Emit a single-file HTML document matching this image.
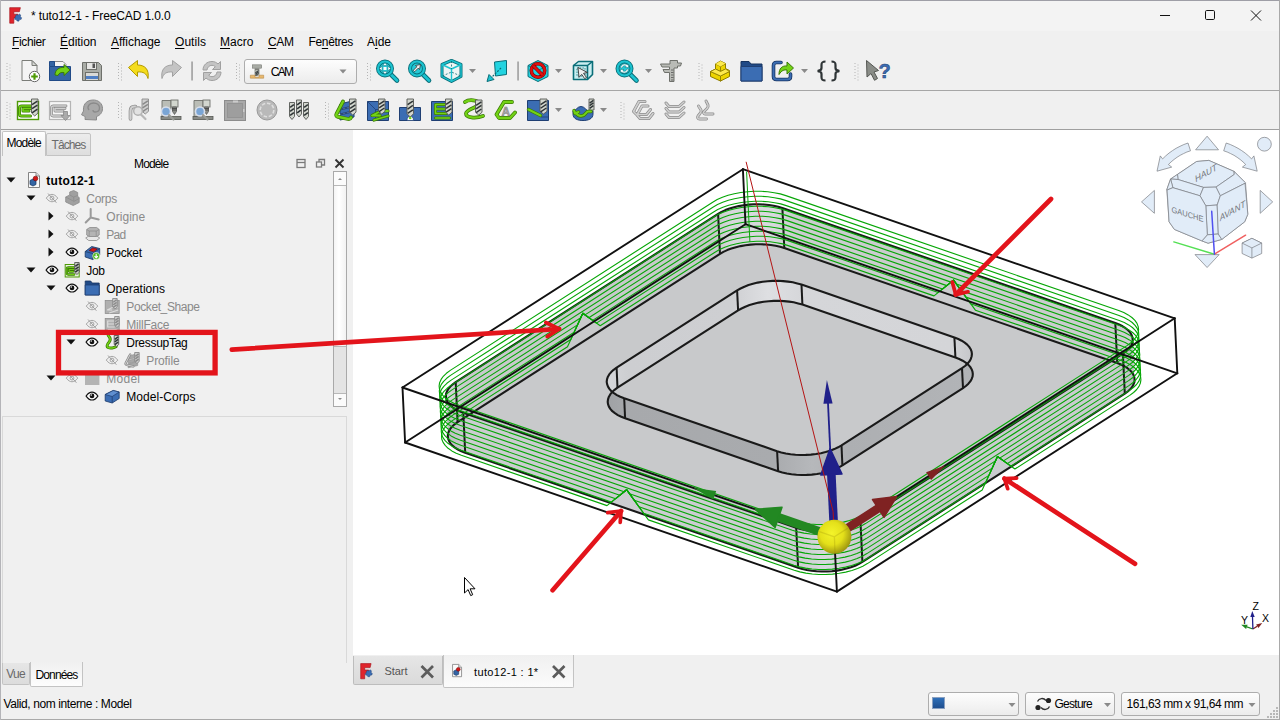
<!DOCTYPE html><html><head><meta charset="utf-8"><title>tuto12-1 - FreeCAD</title><style>
*{box-sizing:border-box;margin:0;padding:0}
html,body{width:1280px;height:720px;overflow:hidden;background:#f0f0f0}
body{font-family:"Liberation Sans",sans-serif;font-size:12px;color:#000;position:relative}
.a{position:absolute}
.t{position:absolute;white-space:nowrap;line-height:16px;height:16px}
.g{color:#8c8c8c}
u{text-decoration-thickness:1px;text-underline-offset:1.5px}
#view{position:absolute;left:353px;top:130px;width:926px;height:525px;background:#fff}
.cb{position:absolute;border:1px solid #adadad;border-radius:3px;background:linear-gradient(#fdfdfd,#ececec)}
.tab{position:absolute;border:1px solid #c3c3c3;border-bottom:none;border-radius:2px 2px 0 0}
</style></head><body><div class="a" style="left:0;top:0;width:1280px;height:31px;background:#f3f3f3"></div>
<div id="t0" class="t " style="left:31px;top:7.5px;letter-spacing:-0.124px;">* tuto12-1 - FreeCAD 1.0.0</div>
<div id="t1" class="t " style="left:12px;top:33.5px;letter-spacing:-0.362px;"><u>F</u>ichier</div>
<div id="t2" class="t " style="left:60px;top:33.5px;letter-spacing:-0.029px;"><u>É</u>dition</div>
<div id="t3" class="t " style="left:111px;top:33.5px;letter-spacing:-0.036px;"><u>A</u>ffichage</div>
<div id="t4" class="t " style="left:175px;top:33.5px;letter-spacing:0.052px;"><u>O</u>utils</div>
<div id="t5" class="t " style="left:220px;top:33.5px;letter-spacing:0.031px;"><u>M</u>acro</div>
<div id="t6" class="t " style="left:268px;top:33.5px;letter-spacing:-0.391px;"><u>C</u>AM</div>
<div id="t7" class="t " style="left:308.5px;top:33.5px;letter-spacing:-0.361px;">Fe<u>n</u>êtres</div>
<div id="t8" class="t " style="left:367px;top:33.5px;letter-spacing:-0.012px;">A<u>i</u>de</div>
<div class="a" style="left:0;top:90px;width:1280px;height:1px;background:#a6a6a6"></div>
<div class="a" style="left:0;top:129px;width:1280px;height:1px;background:#9f9f9f"></div>
<div class="cb" style="left:244px;top:59px;width:113px;height:25px"></div>
<div id="t9" class="t " style="left:270.7px;top:63.5px;letter-spacing:-1.691px;">CAM</div>
<div class="tab" style="left:46px;top:133px;width:45px;height:23px;background:linear-gradient(#ececec,#dedede);border-bottom:1px solid #c3c3c3"></div>
<div class="tab" style="left:2px;top:131px;width:44px;height:25px;background:linear-gradient(#fff,#f0f0f0 70%)"></div>
<div id="t10" class="t " style="left:6.6px;top:135px;letter-spacing:-0.843px;">Modèle</div>
<div id="t11" class="t " style="left:51.6px;top:136.8px;letter-spacing:-0.943px;color:#6a6a6a">Tâches</div>
<div id="t12" class="t " style="left:134px;top:155.5px;letter-spacing:-0.860px;">Modèle</div>
<div id="t13" class="t " style="left:46.3px;top:172.6px;letter-spacing:0.254px;font-weight:bold;">tuto12-1</div>
<div id="t14" class="t " style="left:86.3px;top:190.6px;letter-spacing:-0.263px;color:#8a8a8a;">Corps</div>
<div id="t15" class="t " style="left:106.3px;top:208.6px;letter-spacing:0.045px;color:#8a8a8a;">Origine</div>
<div id="t16" class="t " style="left:106.3px;top:226.6px;letter-spacing:-0.686px;color:#8a8a8a;">Pad</div>
<div id="t17" class="t " style="left:106.3px;top:244.6px;letter-spacing:-0.165px;">Pocket</div>
<div id="t18" class="t " style="left:86.3px;top:262.6px;letter-spacing:-0.320px;">Job</div>
<div id="t19" class="t " style="left:106.3px;top:280.6px;letter-spacing:-0.010px;">Operations</div>
<div id="t20" class="t " style="left:126.3px;top:298.6px;letter-spacing:-0.397px;color:#8a8a8a;">Pocket_Shape</div>
<div id="t21" class="t " style="left:126.3px;top:316.6px;letter-spacing:-0.209px;color:#8a8a8a;">MillFace</div>
<div id="t22" class="t " style="left:126.3px;top:334.6px;letter-spacing:-0.293px;">DressupTag</div>
<div id="t23" class="t " style="left:146.3px;top:352.6px;letter-spacing:-0.117px;color:#8a8a8a;">Profile</div>
<div id="t24" class="t " style="left:106.3px;top:370.6px;letter-spacing:0.263px;color:#8a8a8a;">Model</div>
<div id="t25" class="t " style="left:126.3px;top:388.6px;letter-spacing:0.054px;">Model-Corps</div>
<div class="a" style="left:333px;top:171px;width:14px;height:236px;background:#e4e4e4;border:1px solid #a9a9a9"></div>
<div class="a" style="left:334px;top:185px;width:12px;height:162px;background:linear-gradient(90deg,#f4f4f4,#fff 40%,#f2f2f2);border-top:1px solid #b8b8b8;border-bottom:1px solid #b8b8b8"></div>
<div class="a" style="left:334px;top:172px;width:12px;height:13px;background:#fbfbfb"></div>
<div class="a" style="left:334px;top:393px;width:12px;height:13px;background:#fbfbfb;border-top:1px solid #b8b8b8"></div>
<div class="a" style="left:2px;top:416px;width:345px;height:247px;border:1px solid #d9d9d9;border-bottom:none;background:#f0f0f0"></div>
<div class="tab" style="left:2px;top:663px;width:28px;height:22px;border:1px solid #c3c3c3;border-top:none;border-radius:0 0 2px 2px;background:linear-gradient(#e6e6e6,#dcdcdc)"></div>
<div class="tab" style="left:30px;top:662px;width:53px;height:25px;border:1px solid #c3c3c3;border-top:none;border-radius:0 0 2px 2px;background:linear-gradient(#f0f0f0,#fdfdfd)"></div>
<div id="t26" class="t " style="left:6.3px;top:665.5px;letter-spacing:-0.802px;color:#6a6a6a">Vue</div>
<div id="t27" class="t " style="left:35.5px;top:667px;letter-spacing:-0.864px;">Données</div>
<div id="t28" class="t " style="left:3.5px;top:696px;letter-spacing:-0.404px;">Valid, nom interne : Model</div>
<div id="view"></div>
<div class="tab" style="left:353px;top:656px;width:90px;height:29px;border:1px solid #bdbdbd;border-top:none;border-radius:0 0 2px 2px;background:linear-gradient(#e6e6e6,#dadada)"></div>
<div class="tab" style="left:443px;top:655px;width:131px;height:33px;border:1px solid #c3c3c3;border-top:none;border-radius:0 0 2px 2px;background:linear-gradient(#f0f0f0,#fbfbfb)"></div>
<div id="t29" class="t " style="left:384.5px;top:662.5px;letter-spacing:-0.047px;color:#555;font-size:11px">Start</div>
<div id="t30" class="t " style="left:474px;top:663.5px;letter-spacing:0.351px;font-size:11px">tuto12-1 : 1*</div>
<div class="cb" style="left:928px;top:692px;width:91px;height:24px"></div>
<div class="a" style="left:932px;top:697px;width:13px;height:12px;background:linear-gradient(#2f6fb8,#1f4f8f);border:1px solid #8aa0c0"></div>
<div class="cb" style="left:1025px;top:692px;width:90px;height:24px"></div>
<div id="t31" class="t " style="left:1054.5px;top:696px;letter-spacing:-0.741px;">Gesture</div>
<div class="cb" style="left:1121px;top:692px;width:139px;height:24px"></div>
<div id="t32" class="t " style="left:1126.5px;top:696px;letter-spacing:-0.478px;">161,63 mm x 91,64 mm</div>
<svg class="a" style="left:0;top:0" width="1280" height="720" viewBox="0 0 1280 720"><defs><clipPath id="vclip"><rect x="353" y="130" width="926" height="525"/></clipPath></defs><g clip-path="url(#vclip)">
<defs><linearGradient id="gw" x1="0" x2="1"><stop offset="0" stop-color="#bfc0c4"/><stop offset=".5" stop-color="#d9dade"/><stop offset="1" stop-color="#c4c5c9"/></linearGradient><clipPath id="cpk"><polygon points="801.5,284.6 797.3,283.4 792.8,282.3 788,281.6 783.1,281.1 778,280.8 772.9,280.9 767.7,281.2 762.7,281.8 757.7,282.6 753,283.8 748.5,285.1 744.4,286.7 740.5,288.5 737.1,290.4 616.6,367.7 613.6,369.8 611.2,372.1 609.2,374.4 607.8,376.9 607,379.3 606.7,381.8 607.1,384.2 608,386.6 609.4,388.9 611.4,391.2 613.9,393.2 616.9,395.1 620.3,396.8 624.2,398.3 777.1,451.2 781.3,452.4 785.8,453.5 790.6,454.2 795.5,454.7 800.6,455 805.8,454.9 810.9,454.6 815.9,454 820.9,453.2 825.6,452 830.1,450.7 834.3,449.1 838.1,447.3 841.5,445.4 962,368.1 965,366 967.4,363.7 969.4,361.4 970.8,358.9 971.6,356.5 971.9,354 971.6,351.6 970.7,349.2 969.2,346.9 967.2,344.6 964.7,342.6 961.7,340.7 958.3,339 954.4,337.5"/></clipPath></defs>
<polygon points="445.9,396.2 446.1,393.7 447,391.3 448.4,388.9 450.3,386.5 452.8,384.3 455.7,382.1 718.1,213.9 721.5,211.9 725.3,210.1 729.5,208.6 734,207.2 738.7,206.1 743.6,205.2 748.7,204.6 753.8,204.3 759,204.3 764,204.5 769,205 773.7,205.8 778.2,206.8 782.4,208.1 1115.3,323 1119.1,324.5 1122.6,326.3 1125.6,328.2 1128.1,330.2 1130.1,332.4 1131.5,334.8 1132.4,337.2 1132.7,339.6 1134.6,379.6 1134.4,382.1 1133.5,384.5 1132.2,386.9 1130.2,389.3 1127.8,391.5 1124.8,393.7 862.4,561.9 859,563.9 855.2,565.7 851,567.2 846.5,568.6 841.8,569.7 836.9,570.6 831.8,571.2 826.7,571.5 821.6,571.5 816.5,571.3 811.5,570.8 806.8,570 802.3,569 798.1,567.7 465.2,452.8 461.4,451.3 457.9,449.5 454.9,447.6 452.4,445.6 450.4,443.4 449,441 448.1,438.6 447.8,436.2" fill="url(#gwl)"/>
<clipPath id="cpt"><polygon points="782.4,208.1 778.2,206.8 773.7,205.8 769,205 764,204.5 759,204.3 753.8,204.3 748.7,204.6 743.6,205.2 738.7,206.1 734,207.2 729.5,208.6 725.3,210.1 721.5,211.9 718.1,213.9 455.7,382.1 452.8,384.3 450.3,386.5 448.4,388.9 447,391.3 446.1,393.7 445.9,396.2 446.2,398.6 447.1,401 448.5,403.4 450.5,405.6 453,407.6 456,409.5 459.5,411.3 463.3,412.8 796.2,527.7 800.4,529 804.9,530 809.6,530.8 814.6,531.3 819.7,531.5 824.8,531.5 829.9,531.2 835,530.6 839.9,529.7 844.6,528.6 849.1,527.2 853.3,525.7 857.1,523.9 860.5,521.9 1122.9,353.7 1125.9,351.5 1128.3,349.3 1130.3,346.9 1131.7,344.5 1132.5,342.1 1132.7,339.6 1132.4,337.2 1131.5,334.8 1130.1,332.4 1128.1,330.2 1125.6,328.2 1122.6,326.3 1119.1,324.5 1115.3,323"/></clipPath>
<defs><linearGradient id="gbk" gradientUnits="userSpaceOnUse" x1="446" x2="1142" y1="0" y2="0"><stop offset="0" stop-color="#d4d5d9"/><stop offset=".03" stop-color="#c8c9cb"/><stop offset=".385" stop-color="#c8c9cb"/><stop offset=".41" stop-color="#d6d7db"/><stop offset=".47" stop-color="#d8d9dd"/><stop offset=".5" stop-color="#cbccce"/><stop offset=".96" stop-color="#cbccce"/><stop offset="1" stop-color="#d2d3d7"/></linearGradient></defs>
<polygon points="782.4,208.1 778.2,206.8 773.7,205.8 769,205 764,204.5 759,204.3 753.8,204.3 748.7,204.6 743.6,205.2 738.7,206.1 734,207.2 729.5,208.6 725.3,210.1 721.5,211.9 718.1,213.9 455.7,382.1 452.8,384.3 450.3,386.5 448.4,388.9 447,391.3 446.1,393.7 445.9,396.2 446.2,398.6 447.1,401 448.5,403.4 450.5,405.6 453,407.6 456,409.5 459.5,411.3 463.3,412.8 796.2,527.7 800.4,529 804.9,530 809.6,530.8 814.6,531.3 819.7,531.5 824.8,531.5 829.9,531.2 835,530.6 839.9,529.7 844.6,528.6 849.1,527.2 853.3,525.7 857.1,523.9 860.5,521.9 1122.9,353.7 1125.9,351.5 1128.3,349.3 1130.3,346.9 1131.7,344.5 1132.5,342.1 1132.7,339.6 1132.4,337.2 1131.5,334.8 1130.1,332.4 1128.1,330.2 1125.6,328.2 1122.6,326.3 1119.1,324.5 1115.3,323" fill="url(#gbk)"/>
<polygon points="784.3,248.1 780.1,246.8 775.6,245.8 770.9,245 765.9,244.5 760.8,244.3 755.7,244.3 750.6,244.6 745.5,245.2 740.6,246.1 735.9,247.2 731.4,248.6 727.2,250.1 723.4,251.9 720,253.9 457.6,422.1 454.6,424.3 452.2,426.5 450.2,428.9 448.9,431.3 448,433.7 447.8,436.2 448.1,438.6 449,441 450.4,443.4 452.4,445.6 454.9,447.6 457.9,449.5 461.4,451.3 465.2,452.8 798.1,567.7 802.3,569 806.8,570 811.5,570.8 816.5,571.3 821.6,571.5 826.7,571.5 831.8,571.2 836.9,570.6 841.8,569.7 846.5,568.6 851,567.2 855.2,565.7 859,563.9 862.4,561.9 1124.8,393.7 1127.8,391.5 1130.2,389.3 1132.2,386.9 1133.5,384.5 1134.4,382.1 1134.6,379.6 1134.3,377.2 1133.4,374.8 1132,372.4 1130,370.2 1127.5,368.2 1124.5,366.3 1121,364.5 1117.2,363" fill="#c8c9cb" clip-path="url(#cpt)"/>
<defs><linearGradient id="gd" gradientUnits="userSpaceOnUse" x1="606" x2="974" y1="0" y2="0"><stop offset="0" stop-color="#9fa1a4"/><stop offset=".06" stop-color="#a7a9ac"/><stop offset=".46" stop-color="#a9abae"/><stop offset=".56" stop-color="#b6b8bb"/><stop offset=".66" stop-color="#adafb2"/><stop offset="1" stop-color="#b2b4b7"/></linearGradient><linearGradient id="gl" gradientUnits="userSpaceOnUse" x1="606" x2="974" y1="0" y2="0"><stop offset="0" stop-color="#d6d7da"/><stop offset=".06" stop-color="#cdced1"/><stop offset=".34" stop-color="#cecfd2"/><stop offset=".44" stop-color="#dedfe2"/><stop offset=".54" stop-color="#d5d6d9"/><stop offset=".94" stop-color="#d4d5d8"/><stop offset="1" stop-color="#c4c5c8"/></linearGradient><linearGradient id="gwl" gradientUnits="userSpaceOnUse" x1="446" x2="1142" y1="0" y2="0"><stop offset="0" stop-color="#bbbcc0"/><stop offset=".03" stop-color="#cbccd0"/><stop offset=".5" stop-color="#cccdd1"/><stop offset=".55" stop-color="#d8d9dd"/><stop offset=".6" stop-color="#cbccd0"/><stop offset=".96" stop-color="#cacbcf"/><stop offset="1" stop-color="#babbbf"/></linearGradient></defs>
<polygon points="802.4,304.6 798.2,303.4 793.7,302.3 789,301.6 784,301.1 778.9,300.8 773.8,300.9 768.7,301.2 763.6,301.8 758.7,302.6 754,303.8 749.5,305.1 745.3,306.7 741.5,308.5 738.1,310.4 617.5,387.7 614.6,389.8 612.1,392.1 610.2,394.4 608.8,396.9 608,399.3 607.7,401.8 608,404.2 608.9,406.6 610.3,408.9 612.3,411.2 614.9,413.2 617.8,415.1 621.3,416.8 625.1,418.3 778.1,471.2 782.3,472.4 786.8,473.5 791.5,474.2 796.5,474.7 801.6,475 806.7,474.9 811.8,474.6 816.9,474 821.8,473.2 826.6,472 831,470.7 835.2,469.1 839,467.3 842.4,465.4 963,388.1 965.9,386 968.4,383.7 970.3,381.4 971.7,378.9 972.6,376.5 972.8,374 972.5,371.6 971.6,369.2 970.2,366.9 968.2,364.6 965.7,362.6 962.7,360.7 959.2,359 955.4,357.5" fill="url(#gd)"/>
<polygon points="801.5,284.6 797.3,283.4 792.8,282.3 788,281.6 783.1,281.1 778,280.8 772.9,280.9 767.7,281.2 762.7,281.8 757.7,282.6 753,283.8 748.5,285.1 744.4,286.7 740.5,288.5 737.1,290.4 616.6,367.7 613.6,369.8 611.2,372.1 609.2,374.4 607.8,376.9 607,379.3 606.7,381.8 607.1,384.2 608,386.6 609.4,388.9 611.4,391.2 613.9,393.2 616.9,395.1 620.3,396.8 624.2,398.3 777.1,451.2 781.3,452.4 785.8,453.5 790.6,454.2 795.5,454.7 800.6,455 805.8,454.9 810.9,454.6 815.9,454 820.9,453.2 825.6,452 830.1,450.7 834.3,449.1 838.1,447.3 841.5,445.4 962,368.1 965,366 967.4,363.7 969.4,361.4 970.8,358.9 971.6,356.5 971.9,354 971.6,351.6 970.7,349.2 969.2,346.9 967.2,344.6 964.7,342.6 961.7,340.7 958.3,339 954.4,337.5" fill="url(#gl)"/>
<polygon points="802.4,304.6 798.2,303.4 793.7,302.3 789,301.6 784,301.1 778.9,300.8 773.8,300.9 768.7,301.2 763.6,301.8 758.7,302.6 754,303.8 749.5,305.1 745.3,306.7 741.5,308.5 738.1,310.4 617.5,387.7 614.6,389.8 612.1,392.1 610.2,394.4 608.8,396.9 608,399.3 607.7,401.8 608,404.2 608.9,406.6 610.3,408.9 612.3,411.2 614.9,413.2 617.8,415.1 621.3,416.8 625.1,418.3 778.1,471.2 782.3,472.4 786.8,473.5 791.5,474.2 796.5,474.7 801.6,475 806.7,474.9 811.8,474.6 816.9,474 821.8,473.2 826.6,472 831,470.7 835.2,469.1 839,467.3 842.4,465.4 963,388.1 965.9,386 968.4,383.7 970.3,381.4 971.7,378.9 972.6,376.5 972.8,374 972.5,371.6 971.6,369.2 970.2,366.9 968.2,364.6 965.7,362.6 962.7,360.7 959.2,359 955.4,357.5" fill="#c8c9cb" clip-path="url(#cpk)"/>
<polygon points="784.3,248.1 780.1,246.8 775.6,245.8 770.9,245 765.9,244.5 760.8,244.3 755.7,244.3 750.6,244.6 745.5,245.2 740.6,246.1 735.9,247.2 731.4,248.6 727.2,250.1 723.4,251.9 720,253.9 457.6,422.1 454.6,424.3 452.2,426.5 450.2,428.9 448.9,431.3 448,433.7 447.8,436.2 448.1,438.6 449,441 450.4,443.4 452.4,445.6 454.9,447.6 457.9,449.5 461.4,451.3 465.2,452.8 798.1,567.7 802.3,569 806.8,570 811.5,570.8 816.5,571.3 821.6,571.5 826.7,571.5 831.8,571.2 836.9,570.6 841.8,569.7 846.5,568.6 851,567.2 855.2,565.7 859,563.9 862.4,561.9 1124.8,393.7 1127.8,391.5 1130.2,389.3 1132.2,386.9 1133.5,384.5 1134.4,382.1 1134.6,379.6 1134.3,377.2 1133.4,374.8 1132,372.4 1130,370.2 1127.5,368.2 1124.5,366.3 1121,364.5 1117.2,363" fill="none" stroke="#1a1a1a" stroke-width="2.1" stroke-linejoin="round"/>
<polygon points="782.4,208.1 778.2,206.8 773.7,205.8 769,205 764,204.5 759,204.3 753.8,204.3 748.7,204.6 743.6,205.2 738.7,206.1 734,207.2 729.5,208.6 725.3,210.1 721.5,211.9 718.1,213.9 455.7,382.1 452.8,384.3 450.3,386.5 448.4,388.9 447,391.3 446.1,393.7 445.9,396.2 446.2,398.6 447.1,401 448.5,403.4 450.5,405.6 453,407.6 456,409.5 459.5,411.3 463.3,412.8 796.2,527.7 800.4,529 804.9,530 809.6,530.8 814.6,531.3 819.7,531.5 824.8,531.5 829.9,531.2 835,530.6 839.9,529.7 844.6,528.6 849.1,527.2 853.3,525.7 857.1,523.9 860.5,521.9 1122.9,353.7 1125.9,351.5 1128.3,349.3 1130.3,346.9 1131.7,344.5 1132.5,342.1 1132.7,339.6 1132.4,337.2 1131.5,334.8 1130.1,332.4 1128.1,330.2 1125.6,328.2 1122.6,326.3 1119.1,324.5 1115.3,323" fill="none" stroke="#1a1a1a" stroke-width="2.1" stroke-linejoin="round"/>
<polygon points="802.4,304.6 798.2,303.4 793.7,302.3 789,301.6 784,301.1 778.9,300.8 773.8,300.9 768.7,301.2 763.6,301.8 758.7,302.6 754,303.8 749.5,305.1 745.3,306.7 741.5,308.5 738.1,310.4 617.5,387.7 614.6,389.8 612.1,392.1 610.2,394.4 608.8,396.9 608,399.3 607.7,401.8 608,404.2 608.9,406.6 610.3,408.9 612.3,411.2 614.9,413.2 617.8,415.1 621.3,416.8 625.1,418.3 778.1,471.2 782.3,472.4 786.8,473.5 791.5,474.2 796.5,474.7 801.6,475 806.7,474.9 811.8,474.6 816.9,474 821.8,473.2 826.6,472 831,470.7 835.2,469.1 839,467.3 842.4,465.4 963,388.1 965.9,386 968.4,383.7 970.3,381.4 971.7,378.9 972.6,376.5 972.8,374 972.5,371.6 971.6,369.2 970.2,366.9 968.2,364.6 965.7,362.6 962.7,360.7 959.2,359 955.4,357.5" fill="none" stroke="#1a1a1a" stroke-width="2.1" stroke-linejoin="round"/>
<polygon points="801.5,284.6 797.3,283.4 792.8,282.3 788,281.6 783.1,281.1 778,280.8 772.9,280.9 767.7,281.2 762.7,281.8 757.7,282.6 753,283.8 748.5,285.1 744.4,286.7 740.5,288.5 737.1,290.4 616.6,367.7 613.6,369.8 611.2,372.1 609.2,374.4 607.8,376.9 607,379.3 606.7,381.8 607.1,384.2 608,386.6 609.4,388.9 611.4,391.2 613.9,393.2 616.9,395.1 620.3,396.8 624.2,398.3 777.1,451.2 781.3,452.4 785.8,453.5 790.6,454.2 795.5,454.7 800.6,455 805.8,454.9 810.9,454.6 815.9,454 820.9,453.2 825.6,452 830.1,450.7 834.3,449.1 838.1,447.3 841.5,445.4 962,368.1 965,366 967.4,363.7 969.4,361.4 970.8,358.9 971.6,356.5 971.9,354 971.6,351.6 970.7,349.2 969.2,346.9 967.2,344.6 964.7,342.6 961.7,340.7 958.3,339 954.4,337.5" fill="none" stroke="#1a1a1a" stroke-width="2.1" stroke-linejoin="round"/>
<line x1="860.5" y1="521.9" x2="862.4" y2="561.9" stroke="#1a1a1a" stroke-width="2"/>
<line x1="796.2" y1="527.7" x2="798.1" y2="567.7" stroke="#1a1a1a" stroke-width="2"/>
<line x1="1122.9" y1="353.7" x2="1124.8" y2="393.7" stroke="#1a1a1a" stroke-width="2"/>
<line x1="1115.3" y1="323" x2="1117.2" y2="363" stroke="#1a1a1a" stroke-width="2"/>
<line x1="463.3" y1="412.8" x2="465.2" y2="452.8" stroke="#1a1a1a" stroke-width="2"/>
<line x1="455.7" y1="382.1" x2="457.6" y2="422.1" stroke="#1a1a1a" stroke-width="2"/>
<line x1="718.1" y1="213.9" x2="720" y2="253.9" stroke="#1a1a1a" stroke-width="2"/>
<line x1="782.4" y1="208.1" x2="784.3" y2="248.1" stroke="#1a1a1a" stroke-width="2"/>
<line x1="841.5" y1="445.4" x2="842.4" y2="465.4" stroke="#1a1a1a" stroke-width="2"/>
<line x1="777.1" y1="451.2" x2="778.1" y2="471.2" stroke="#1a1a1a" stroke-width="2"/>
<line x1="962" y1="368.1" x2="963" y2="388.1" stroke="#1a1a1a" stroke-width="2"/>
<line x1="954.4" y1="337.5" x2="955.4" y2="357.5" stroke="#1a1a1a" stroke-width="2"/>
<line x1="624.2" y1="398.3" x2="625.1" y2="418.3" stroke="#1a1a1a" stroke-width="2"/>
<line x1="616.6" y1="367.7" x2="617.5" y2="387.7" stroke="#1a1a1a" stroke-width="2"/>
<line x1="737.1" y1="290.4" x2="738.1" y2="310.4" stroke="#1a1a1a" stroke-width="2"/>
<line x1="801.5" y1="284.6" x2="802.4" y2="304.6" stroke="#1a1a1a" stroke-width="2"/>
<polygon points="785.9,195.6 780.3,193.9 774.2,192.7 767.8,191.8 761.1,191.3 754.3,191.3 747.5,191.7 740.8,192.5 734.3,193.7 728.1,195.3 722.4,197.3 717.2,199.6 712.7,202.2 450.3,370.4 446.4,373.3 443.3,376.3 441.1,379.4 439.6,382.7 439.1,386 439.5,389.2 440.7,392.4 442.8,395.4 445.7,398.3 449.5,400.9 453.9,403.2 459,405.3 791.8,520.2 797.4,521.9 803.5,523.1 809.9,524 816.6,524.5 823.4,524.5 830.2,524.1 836.9,523.3 843.4,522.1 849.5,520.5 855.2,518.5 860.4,516.2 865,513.6 1127.4,345.4 1131.2,342.5 1134.3,339.5 1136.6,336.4 1138,333.1 1138.6,329.8 1138.2,326.6 1137,323.4 1134.9,320.4 1131.9,317.5 1128.2,314.9 1123.8,312.6 1118.7,310.5" fill="none" stroke="#06a606" stroke-width="1.12" stroke-linejoin="round"/>
<polygon points="786.1,200.6 780.5,198.9 774.4,197.7 768,196.8 761.3,196.3 754.5,196.3 747.7,196.7 741,197.5 734.5,198.7 728.4,200.3 722.7,202.3 717.5,204.6 712.9,207.2 450.5,375.4 446.7,378.3 443.6,381.3 441.3,384.4 439.9,387.7 439.3,391 439.7,394.2 440.9,397.4 443,400.4 446,403.3 449.7,405.9 454.1,408.2 459.2,410.3 792,525.2 797.7,526.9 803.7,528.1 810.2,529 816.8,529.5 823.6,529.5 830.4,529.1 837.1,528.3 843.6,527.1 849.8,525.5 855.5,523.5 860.7,521.2 865.2,518.6 1127.6,350.4 1131.5,347.5 1134.6,344.5 1136.9,341.4 1138.3,338.1 1138.8,334.8 1138.5,331.6 1137.2,328.4 1135.1,325.4 1132.2,322.5 1128.5,319.9 1124,317.6 1119,315.5" fill="none" stroke="#06a606" stroke-width="1.12" stroke-linejoin="round"/>
<polygon points="786.3,205.6 780.7,203.9 774.7,202.7 768.2,201.8 761.6,201.3 754.8,201.3 748,201.7 741.3,202.5 734.8,203.7 728.6,205.3 722.9,207.3 717.7,209.6 713.2,212.2 450.8,380.4 446.9,383.3 443.8,386.3 441.5,389.4 440.1,392.7 439.6,396 439.9,399.2 441.2,402.4 443.3,405.4 446.2,408.3 449.9,410.9 454.4,413.2 459.4,415.3 792.3,530.2 797.9,531.9 804,533.1 810.4,534 817.1,534.5 823.9,534.5 830.7,534.1 837.4,533.3 843.8,532.1 850,530.5 855.7,528.5 860.9,526.2 865.5,523.6 1127.9,355.4 1131.7,352.5 1134.8,349.5 1137.1,346.4 1138.5,343.1 1139,339.8 1138.7,336.6 1137.4,333.4 1135.3,330.4 1132.4,327.5 1128.7,324.9 1124.3,322.6 1119.2,320.5" fill="none" stroke="#06a606" stroke-width="1.12" stroke-linejoin="round"/>
<polygon points="786.6,210.6 781,208.9 774.9,207.7 768.5,206.8 761.8,206.3 755,206.3 748.2,206.7 741.5,207.5 735,208.7 728.9,210.3 723.1,212.3 717.9,214.6 713.4,217.2 451,385.4 447.1,388.3 444,391.3 441.8,394.4 440.3,397.7 439.8,401 440.2,404.2 441.4,407.4 443.5,410.4 446.5,413.3 450.2,415.9 454.6,418.2 459.7,420.3 792.5,535.2 798.1,536.9 804.2,538.1 810.6,539 817.3,539.5 824.1,539.5 830.9,539.1 837.6,538.3 844.1,537.1 850.2,535.5 856,533.5 861.1,531.2 865.7,528.6 1128.1,360.4 1132,357.5 1135.1,354.5 1137.3,351.4 1138.7,348.1 1139.3,344.8 1138.9,341.6 1137.7,338.4 1135.6,335.4 1132.6,332.5 1128.9,329.9 1124.5,327.6 1119.4,325.5" fill="none" stroke="#06a606" stroke-width="1.12" stroke-linejoin="round"/>
<polygon points="786.8,215.6 781.2,213.9 775.1,212.7 768.7,211.8 762,211.3 755.2,211.3 748.4,211.7 741.7,212.5 735.2,213.7 729.1,215.3 723.4,217.3 718.2,219.6 713.6,222.2 451.2,390.4 447.4,393.3 444.3,396.3 442,399.4 440.6,402.7 440,406 440.4,409.2 441.6,412.4 443.8,415.4 446.7,418.3 450.4,420.9 454.8,423.2 459.9,425.3 792.7,540.2 798.4,541.9 804.4,543.1 810.9,544 817.5,544.5 824.3,544.5 831.1,544.1 837.8,543.3 844.3,542.1 850.5,540.5 856.2,538.5 861.4,536.2 865.9,533.6 1128.3,365.4 1132.2,362.5 1135.3,359.5 1137.6,356.4 1139,353.1 1139.5,349.8 1139.2,346.6 1137.9,343.4 1135.8,340.4 1132.9,337.5 1129.2,334.9 1124.7,332.6 1119.7,330.5" fill="none" stroke="#06a606" stroke-width="1.12" stroke-linejoin="round"/>
<polygon points="787.1,220.6 781.4,218.9 775.4,217.7 768.9,216.8 762.3,216.3 755.5,216.3 748.7,216.7 742,217.5 735.5,218.7 729.3,220.3 723.6,222.3 718.4,224.6 713.9,227.2 451.5,395.4 447.6,398.3 444.5,401.3 442.2,404.4 440.8,407.7 440.3,411 440.6,414.2 441.9,417.4 444,420.4 446.9,423.3 450.6,425.9 455.1,428.2 460.1,430.3 793,545.2 798.6,546.9 804.7,548.1 811.1,549 817.8,549.5 824.6,549.5 831.4,549.1 838.1,548.3 844.6,547.1 850.7,545.5 856.4,543.5 861.6,541.2 866.2,538.6 1128.6,370.4 1132.4,367.5 1135.5,364.5 1137.8,361.4 1139.2,358.1 1139.8,354.8 1139.4,351.6 1138.2,348.4 1136,345.4 1133.1,342.5 1129.4,339.9 1125,337.6 1119.9,335.5" fill="none" stroke="#06a606" stroke-width="1.12" stroke-linejoin="round"/>
<polygon points="787.3,225.6 781.7,223.9 775.6,222.7 769.2,221.8 762.5,221.3 755.7,221.3 748.9,221.7 742.2,222.5 735.7,223.7 729.6,225.3 723.8,227.3 718.7,229.6 714.1,232.2 585,314.9 582.8,313.3 580.8,317.7 451.7,400.4 447.8,403.3 444.7,406.3 442.5,409.4 441.1,412.7 440.5,416 440.9,419.2 442.1,422.4 444.2,425.4 447.2,428.3 450.9,430.9 455.3,433.2 460.4,435.3 624.1,491.8 626.6,489.7 629.5,493.7 793.2,550.2 798.8,551.9 804.9,553.1 811.3,554 818,554.5 824.8,554.5 831.6,554.1 838.3,553.3 844.8,552.1 850.9,550.5 856.7,548.5 861.9,546.2 866.4,543.6 995.5,460.9 997.5,456.5 999.7,458.1 1128.8,375.4 1132.7,372.5 1135.8,369.5 1138,366.4 1139.5,363.1 1140,359.8 1139.6,356.6 1138.4,353.4 1136.3,350.4 1133.3,347.5 1129.6,344.9 1125.2,342.6 1120.1,340.5 956.4,284 953.6,280.1 951,282.1" fill="none" stroke="#06a606" stroke-width="1.12" stroke-linejoin="round"/>
<polygon points="787.5,230.6 781.9,228.9 775.8,227.7 769.4,226.8 762.7,226.3 755.9,226.3 749.1,226.7 742.4,227.5 736,228.7 729.8,230.3 724.1,232.3 718.9,234.6 714.3,237.2 588.8,317.7 582.8,313.3 577.5,324.9 451.9,405.4 448.1,408.3 445,411.3 442.7,414.4 441.3,417.7 440.8,421 441.1,424.2 442.4,427.4 444.5,430.4 447.4,433.3 451.1,435.9 455.5,438.2 460.6,440.3 619.8,495.2 626.6,489.7 634.2,500.2 793.5,555.2 799.1,556.9 805.1,558.1 811.6,559 818.2,559.5 825,559.5 831.8,559.1 838.5,558.3 845,557.1 851.2,555.5 856.9,553.5 862.1,551.2 866.6,548.6 992.2,468.1 997.5,456.5 1003.5,460.9 1129,380.4 1132.9,377.5 1136,374.5 1138.3,371.4 1139.7,368.1 1140.2,364.8 1139.9,361.6 1138.6,358.4 1136.5,355.4 1133.6,352.5 1129.9,349.9 1125.4,347.6 1120.4,345.5 961.2,290.6 953.6,280.1 946.8,285.6" fill="none" stroke="#06a606" stroke-width="1.12" stroke-linejoin="round"/>
<polygon points="787.8,235.6 782.1,233.9 776.1,232.7 769.6,231.8 763,231.3 756.2,231.3 749.4,231.7 742.7,232.5 736.2,233.7 730,235.3 724.3,237.3 719.1,239.6 714.6,242.2 592.6,320.4 582.8,313.3 574.2,332.2 452.2,410.4 448.3,413.3 445.2,416.3 442.9,419.4 441.5,422.7 441,426 441.3,429.2 442.6,432.4 444.7,435.4 447.6,438.3 451.3,440.9 455.8,443.2 460.8,445.3 615.6,498.7 626.6,489.7 639,506.8 793.7,560.2 799.3,561.9 805.4,563.1 811.8,564 818.5,564.5 825.3,564.5 832.1,564.1 838.8,563.3 845.3,562.1 851.4,560.5 857.1,558.5 862.3,556.2 866.9,553.6 988.9,475.4 997.5,456.5 1007.3,463.6 1129.3,385.4 1133.1,382.5 1136.2,379.5 1138.5,376.4 1139.9,373.1 1140.5,369.8 1140.1,366.6 1138.9,363.4 1136.8,360.4 1133.8,357.5 1130.1,354.9 1125.7,352.6 1120.6,350.5 965.9,297.1 953.6,280.1 942.5,289" fill="none" stroke="#06a606" stroke-width="1.12" stroke-linejoin="round"/>
<polygon points="788,240.6 782.4,238.9 776.3,237.7 769.9,236.8 763.2,236.3 756.4,236.3 749.6,236.7 742.9,237.5 736.4,238.7 730.3,240.3 724.6,242.3 719.4,244.6 714.8,247.2 596.4,323.1 582.8,313.3 570.8,339.5 452.4,415.4 448.6,418.3 445.5,421.3 443.2,424.4 441.8,427.7 441.2,431 441.6,434.2 442.8,437.4 444.9,440.4 447.9,443.3 451.6,445.9 456,448.2 461.1,450.3 611.3,502.1 626.6,489.7 643.7,513.3 793.9,565.2 799.5,566.9 805.6,568.1 812,569 818.7,569.5 825.5,569.5 832.3,569.1 839,568.3 845.5,567.1 851.7,565.5 857.4,563.5 862.6,561.2 867.1,558.6 985.6,482.7 997.5,456.5 1011.1,466.3 1129.5,390.4 1133.4,387.5 1136.5,384.5 1138.7,381.4 1140.2,378.1 1140.7,374.8 1140.3,371.6 1139.1,368.4 1137,365.4 1134.1,362.5 1130.3,359.9 1125.9,357.6 1120.8,355.5 970.6,303.7 953.6,280.1 938.2,292.5" fill="none" stroke="#06a606" stroke-width="1.12" stroke-linejoin="round"/>
<polygon points="788.2,245.6 782.6,243.9 776.5,242.7 770.1,241.8 763.5,241.3 756.7,241.3 749.8,241.7 743.1,242.5 736.7,243.7 730.5,245.3 724.8,247.3 719.6,249.6 715,252.2 600.2,325.8 582.8,313.3 567.5,346.8 452.7,420.4 448.8,423.3 445.7,426.3 443.4,429.4 442,432.7 441.5,436 441.8,439.2 443.1,442.4 445.2,445.4 448.1,448.3 451.8,450.9 456.2,453.2 461.3,455.3 607,505.6 626.6,489.7 648.4,519.9 794.2,570.2 799.8,571.9 805.9,573.1 812.3,574 818.9,574.5 825.7,574.5 832.6,574.1 839.3,573.3 845.7,572.1 851.9,570.5 857.6,568.5 862.8,566.2 867.4,563.6 982.2,490 997.5,456.5 1014.9,469 1129.7,395.4 1133.6,392.5 1136.7,389.5 1139,386.4 1140.4,383.1 1140.9,379.8 1140.6,376.6 1139.3,373.4 1137.2,370.4 1134.3,367.5 1130.6,364.9 1126.2,362.6 1121.1,360.5 975.4,310.2 953.6,280.1 934,295.9" fill="none" stroke="#06a606" stroke-width="1.12" stroke-linejoin="round"/>
<!--AXES-->
<line x1="834.3" y1="536.6" x2="836.9" y2="591.6" stroke="#111" stroke-width="1.9" stroke-linecap="round"/>
<line x1="834.3" y1="536.6" x2="402.5" y2="387.5" stroke="#111" stroke-width="1.9" stroke-linecap="round"/>
<line x1="834.3" y1="536.6" x2="1174.7" y2="318.3" stroke="#111" stroke-width="1.9" stroke-linecap="round"/>
<line x1="402.5" y1="387.5" x2="405.1" y2="442.5" stroke="#111" stroke-width="1.9" stroke-linecap="round"/>
<line x1="836.9" y1="591.6" x2="405.1" y2="442.5" stroke="#111" stroke-width="1.9" stroke-linecap="round"/>
<line x1="836.9" y1="591.6" x2="1177.3" y2="373.3" stroke="#111" stroke-width="1.9" stroke-linecap="round"/>
<line x1="1174.7" y1="318.3" x2="1177.3" y2="373.3" stroke="#111" stroke-width="1.9" stroke-linecap="round"/>
<line x1="1174.7" y1="318.3" x2="742.9" y2="169.2" stroke="#111" stroke-width="1.9" stroke-linecap="round"/>
<line x1="402.5" y1="387.5" x2="742.9" y2="169.2" stroke="#111" stroke-width="1.9" stroke-linecap="round"/>
<line x1="742.9" y1="169.2" x2="745.5" y2="224.2" stroke="#111" stroke-width="1.9" stroke-linecap="round"/>
<line x1="1177.3" y1="373.3" x2="745.5" y2="224.2" stroke="#111" stroke-width="1.9" stroke-linecap="round"/>
<line x1="405.1" y1="442.5" x2="745.5" y2="224.2" stroke="#111" stroke-width="1.9" stroke-linecap="round"/>
<line x1="749.9" y1="241.8" x2="746.6" y2="171.8" stroke="#0aa50a" stroke-width="1"/>
<!--RAPID-->
<defs><radialGradient id="sph" cx=".42" cy=".4" r=".62"><stop offset="0" stop-color="#f4f42a"/><stop offset=".55" stop-color="#e4e01a"/><stop offset="1" stop-color="#9c9410"/></radialGradient></defs>
<polygon points="931.1,480 945.3,465.4 926.1,472.2" fill="#7f2222"/>
<line x1="834.3" y1="536.6" x2="879.3" y2="507.7" stroke="#7f2222" stroke-width="8.6"/>
<polygon points="884,517.3 896.7,496.6 872.5,499.5" fill="#7f2222" stroke="#7f2222" stroke-width="1.5" stroke-linejoin="round"/>
<polygon points="716.2,490.9 693.5,488 713.2,499.6" fill="#228822"/>
<line x1="834.3" y1="536.6" x2="777.2" y2="516.9" stroke="#228822" stroke-width="8.6"/>
<polygon points="782,507.3 755.1,509.3 775.1,527.4" fill="#228822" stroke="#228822" stroke-width="1.5" stroke-linejoin="round"/>
<line x1="830.3" y1="451.6" x2="827.9" y2="401.1" stroke="#20208a" stroke-width="1.8"/>
<polygon points="832.6,403.4 826.9,380.1 823.4,403.8" fill="#20208a"/>
<line x1="834.3" y1="536.6" x2="831.3" y2="473.1" stroke="#20208a" stroke-width="8.6"/>
<polygon points="842,474.1 830.1,448.6 820.8,475.1" fill="#20208a" stroke="#20208a" stroke-width="1.5" stroke-linejoin="round"/>
<polyline points="746.1,161.8 833.1,511.6 834.3,536.6" fill="none" stroke="#b41414" stroke-width="1"/>
<circle cx="834.4" cy="536.8" r="17" fill="url(#sph)"/>
<path d="M834.400 536.800l.600 17M834.400 536.800l13.500-8.700M834.400 536.800l-15-5.200" stroke="#8a7a00" stroke-width="1.300" opacity=".22" fill="none"/>
<polygon points="1195.6,149.8 1218.5,149.8 1207.1,136.2" fill="#e1ecf8" stroke="#7a7d82" stroke-width=".7" stroke-linejoin="round"/>
<polygon points="1195,254.6 1219.2,254.6 1207.1,267.5" fill="#e1ecf8" stroke="#7a7d82" stroke-width=".7" stroke-linejoin="round"/>
<polygon points="1154.4,190.4 1154.4,213.3 1141.5,201.9" fill="#e1ecf8" stroke="#7a7d82" stroke-width=".7" stroke-linejoin="round"/>
<polygon points="1260.2,190.4 1260.2,213.3 1272.7,201.9" fill="#e1ecf8" stroke="#7a7d82" stroke-width=".7" stroke-linejoin="round"/>
<circle cx="1264.4" cy="144.2" r="6.9" fill="#e1ecf8" stroke="#7a7d82" stroke-width=".7"/>
<polygon points="1226.2,143 1230.3,144.5 1234.2,146.3 1238,148.3 1241.7,150.6 1245.2,153.1 1248.5,155.9 1251.6,158.9 1253.9,155.9 1257.2,171.2 1242.4,167.1 1245.7,164.5 1243,161.9 1240.2,159.5 1237.1,157.3 1234,155.3 1230.6,153.6 1227.2,152 1223.7,150.8" fill="#e1ecf8" stroke="#7a7d82" stroke-width=".7" stroke-linejoin="round"/>
<polygon points="1188,143 1183.9,144.5 1180,146.3 1176.1,148.3 1172.5,150.6 1169,153.1 1165.7,155.9 1162.6,158.9 1160.3,155.9 1157,171.2 1171.7,167.1 1168.4,164.5 1171.1,161.9 1174,159.5 1177,157.3 1180.2,155.3 1183.5,153.6 1186.9,152 1190.5,150.8" fill="#e1ecf8" stroke="#7a7d82" stroke-width=".7" stroke-linejoin="round"/>
<polygon points="1196.6,161.5 1208.8,160.4 1234,171.4 1245.5,182.8 1247.8,214.2 1244.7,221.8 1221.8,239.4 1208.1,243.2 1201.9,240.9 1174.4,229.4 1169.1,221.8 1166.8,189.7 1170.6,179 1177.5,174.4" fill="#e1ecf8" stroke="#7a7d82" stroke-width=".7" stroke-linejoin="round"/>
<polygon points="1178,179.5 1177.5,174.4 1196.6,161.5 1208.8,160.4 1234,171.4 1234.3,174.4 1216,187.1 1203.5,187.4" fill="#e1ecf8" stroke="#7a7d82" stroke-width=".7" stroke-linejoin="round"/>
<polygon points="1170.6,179 1177.5,174.4 1178,179.5" fill="#e1ecf8" stroke="#7a7d82" stroke-width=".7" stroke-linejoin="round"/>
<polygon points="1178,179.5 1203.5,187.4 1200,195.8 1172.9,187.7 1170.6,179" fill="#e1ecf8" stroke="#7a7d82" stroke-width=".7" stroke-linejoin="round"/>
<polygon points="1170.6,179 1172.9,187.7 1167.1,190 1166.8,189.7" fill="#e1ecf8" stroke="#7a7d82" stroke-width=".7" stroke-linejoin="round"/>
<polygon points="1216,187.1 1234.3,174.4 1234,171.4 1245.5,182.8 1245,183.3 1220.3,195.8" fill="#e1ecf8" stroke="#7a7d82" stroke-width=".7" stroke-linejoin="round"/>
<polygon points="1203.5,187.4 1216,187.1 1220.3,195.8 1217.2,205 1205.8,205.8 1200,195.8" fill="#e1ecf8" stroke="#7a7d82" stroke-width=".7" stroke-linejoin="round"/>
<polygon points="1205.8,205.8 1217.2,205 1218.3,234 1207.3,234.8" fill="#e1ecf8" stroke="#7a7d82" stroke-width=".7" stroke-linejoin="round"/>
<polygon points="1207.3,234.8 1218.3,234 1221.8,239.4 1208.1,243.2 1201.9,240.9" fill="#e1ecf8" stroke="#7a7d82" stroke-width=".7" stroke-linejoin="round"/>
<polygon points="1172.9,187.7 1200,195.8 1205.8,205.8 1207.3,234.8 1201.9,240.9 1174.4,229.4 1169.1,221.8 1167.1,190" fill="#e1ecf8" stroke="#7a7d82" stroke-width=".7" stroke-linejoin="round"/>
<polygon points="1220.3,195.8 1245,183.3 1247.8,214.2 1244.7,221.8 1221.8,239.4 1218.3,234 1217.2,205" fill="#e1ecf8" stroke="#7a7d82" stroke-width=".7" stroke-linejoin="round"/>
<text font-family="Liberation Sans,sans-serif" fill="#74777c" font-size="8.6" transform="translate(1195.5,182.4) rotate(-30) skewX(-25)" textLength="25" lengthAdjust="spacingAndGlyphs">HAUT</text>
<text font-family="Liberation Sans,sans-serif" fill="#74777c" font-size="7.8" transform="translate(1171.4,212.2) rotate(17) skewX(17)" textLength="33.5" lengthAdjust="spacingAndGlyphs">GAUCHE</text>
<text font-family="Liberation Sans,sans-serif" fill="#74777c" font-size="8.4" transform="translate(1219.8,221.5) rotate(-30) skewX(-30)" textLength="29.5" lengthAdjust="spacingAndGlyphs">AVANT</text>
<line x1="1214.4" y1="254.2" x2="1173.8" y2="241.9" stroke="#55e055" stroke-width="1.5" stroke-linecap="round"/>
<line x1="1214.4" y1="254.2" x2="1245.6" y2="235.2" stroke="#f06060" stroke-width="1.5" stroke-linecap="round"/>
<line x1="1214.4" y1="254.2" x2="1211.7" y2="211.2" stroke="#5050f0" stroke-width="1.5" stroke-linecap="round"/>
<polygon points="1251.9,238.3 1261.7,243.1 1261.7,253.5 1251.9,258.1 1242.1,253.5 1242.1,243.1" fill="#e1ecf8" stroke="#7a7d82" stroke-width=".7" stroke-linejoin="round"/>
<polygon points="1251.9,238.3 1261.7,243.1 1251.9,247.9 1242.1,243.1" fill="#e1ecf8" stroke="#7a7d82" stroke-width=".7" stroke-linejoin="round"/>
<line x1="1251.9" y1="247.9" x2="1251.9" y2="258.1" stroke="#7a7d82" stroke-width=".7"/>
<line x1="1252.9" y1="629" x2="1257.2" y2="626.2" stroke="#7f2222" stroke-width="1.3"/>
<polygon points="1258.4,628.1 1262.3,623 1256.1,624.4" fill="#7f2222"/>
<line x1="1252.9" y1="629" x2="1246.8" y2="626.8" stroke="#228822" stroke-width="1.3"/>
<polygon points="1247.6,624.8 1241.2,624.8 1246.1,628.9" fill="#228822"/>
<line x1="1252.9" y1="629" x2="1252.5" y2="617" stroke="#20208a" stroke-width="1.3"/>
<polygon points="1254.7,616.9 1252.3,611 1250.3,617.1" fill="#20208a"/>
<text font-family="Liberation Sans,sans-serif" font-size="10.5" fill="#000" text-anchor="middle" x="1255.6" y="610.2">Z</text>
<text font-family="Liberation Sans,sans-serif" font-size="10.5" fill="#000" text-anchor="middle" x="1244.6" y="623.6">Y</text>
<text font-family="Liberation Sans,sans-serif" font-size="10.5" fill="#000" text-anchor="middle" x="1265.6" y="622.4">X</text>
</g>
<g transform="translate(17.5,59) scale(1)"><path d="M4.5 1.5h10l5 5v15h-15z" fill="#f4f4f4" stroke="#7b7d78"/><path d="M14.5 1.5v5h5z" fill="#d4d6d2" stroke="#7b7d78" stroke-linejoin="round"/><circle cx="17" cy="17.5" r="5.2" fill="#fff" stroke="#666"/><path d="M17 14.2v6.6M13.7 17.5h6.6" stroke="#4e9a06" stroke-width="2.2"/></g>
<g transform="translate(48,59) scale(1)"><path d="M6 2.5h9l3 3v9h-12z" fill="#f4f4f4" stroke="#888"/><path d="M1.5 7.5h21v14h-21z" fill="#3465a4" stroke="#204a87"/><path d="M1.5 7.5h5v-5h-5z" fill="#3465a4" stroke="#204a87"/><path d="M7 16c0-5 4-8 9-7.5v-3l6 5.5-6 5.500v-3c-3-.5-5 .5-6 3z" fill="#73d216" stroke="#3a7a04" stroke-linejoin="round"/></g>
<g transform="translate(80,59) scale(1)"><path d="M2.500 3.500h16l3 3v15h-19z" fill="#a9aca6" stroke="#6e706b" stroke-linejoin="round"/><rect x="6.500" y="3.500" width="10" height="7" fill="#e6e6e4" stroke="#6e706b"/><rect x="12.500" y="4.500" width="2.500" height="4.500" fill="#555"/><rect x="5.500" y="13.500" width="13" height="8" fill="#d9dad7" stroke="#6e706b"/><rect x="6" y="17" width="12" height="3" fill="#4f7fc4"/></g>
<g transform="translate(127,59) scale(1)"><path d="M1.500 8.500l9-7v4.500c7 0 12 4 10.500 13.500-1.500-5-4.500-7-10.500-6.500v4.500z" fill="#f4dc1c" stroke="#b39a00" stroke-linejoin="round"/></g>
<g transform="translate(159,59) scale(1)"><path d="M22.500 8.500l-9-7v4.500c-7 0-12 4-10.500 13.500 1.500-5 4.500-7 10.500-6.500v4.500z" fill="#c4c4c4" stroke="#a2a2a2" stroke-linejoin="round"/></g>
<g transform="translate(200,59) scale(1)"><path d="M3 11c0-5 4-8.500 9-8.500 2.500 0 4.500 1 6 2.500l2.500-2.500v8h-8l2.800-2.800c-1-.9-2-1.400-3.300-1.400-2.800 0-4.700 2-5 4.700z" fill="#c4c4c4" stroke="#a0a0a0" stroke-linejoin="round"/><path d="M21 13c0 5-4 8.500-9 8.500-2.500 0-4.500-1-6-2.500l-2.500 2.500v-8h8l-2.800 2.800c1 .9 2 1.400 3.300 1.400 2.800 0 4.700-2 5-4.700z" fill="#c4c4c4" stroke="#a0a0a0" stroke-linejoin="round"/></g>
<g transform="translate(375.5,59) scale(1)"><path d="M14.500 14.500l7 7" stroke="#0a6e78" stroke-width="4.600" stroke-linecap="round"/><path d="M14.500 14.500l7 7" stroke="#1cc3d0" stroke-width="2.600" stroke-linecap="round"/><circle cx="9.500" cy="9.500" r="7" fill="#25c9d6" stroke="#0a6e78" stroke-width="4"/><circle cx="9.500" cy="9.500" r="7" fill="none" stroke="#1cc3d0" stroke-width="2.200"/><path d="M9.500 3.800l2.300 2.800h-4.600zM9.500 15.200l2.300-2.800h-4.600zM3.800 9.500l2.800-2.300v4.600zM15.200 9.500l-2.800-2.300v4.600z" fill="#fff" stroke="#0a6e78" stroke-width=".5"/><rect x="8" y="8" width="3" height="3" fill="#fff"/></g>
<g transform="translate(407.5,59) scale(1)"><path d="M14.500 14.500l7 7" stroke="#0a6e78" stroke-width="4.600" stroke-linecap="round"/><path d="M14.500 14.500l7 7" stroke="#1cc3d0" stroke-width="2.600" stroke-linecap="round"/><circle cx="9.500" cy="9.500" r="7" fill="#25c9d6" stroke="#0a6e78" stroke-width="4"/><circle cx="9.500" cy="9.500" r="7" fill="none" stroke="#1cc3d0" stroke-width="2.200"/><path d="M13 5.500l-1 5-1.300-1.300-3.500 3.500-1.400-1.400 3.500-3.500-1.300-1.300z" fill="#f0f0f0" stroke="#333" stroke-width=".8" stroke-linejoin="round"/></g>
<g transform="translate(439.5,59) scale(1)"><path d="M12 1.500l9.500 4v12l-9.500 5-9.500-5v-12z" fill="#eef4f4" stroke="#0a6e78" stroke-width="3" stroke-linejoin="round"/><path d="M12 1.500l9.500 4v12l-9.500 5-9.500-5v-12zM2.500 5.500l9.500 4.500 9.500-4.500M12 10v12.500" fill="none" stroke="#1cc3d0" stroke-width="1.400" stroke-linejoin="round"/><path d="M12 2v8M3 17l9-4 9 4" stroke="#0a6e78" stroke-width=".8" fill="none" stroke-dasharray="2 1.500"/></g>
<g transform="translate(485,59) scale(1)"><path d="M9.500 3l12-1.500v14l-11 1.500z" fill="#22d3e0" stroke="#0a6e78" stroke-linejoin="round"/><path d="M16 9l-10 10" stroke="#0a6e78" stroke-width="1.200" stroke-dasharray="2 1.300"/><path d="M2 22.500l2-7 5 5z" fill="#1cc3d0" stroke="#0a6e78" stroke-linejoin="round"/></g>
<g transform="translate(526,59) scale(1)"><path d="M12 1.500l10 5v11l-10 5-10-5v-11z" fill="#22d3e0" stroke="#0a6e78" stroke-linejoin="round"/><path d="M2 6.500l10 5 10-5" fill="none" stroke="#0a6e78" stroke-width=".8"/><circle cx="12" cy="11.500" r="6.700" fill="none" stroke="#7a0000" stroke-width="3.600"/><circle cx="12" cy="11.500" r="6.700" fill="none" stroke="#e01010" stroke-width="2.400"/><path d="M7.300 6.800l9.400 9.400" stroke="#7a0000" stroke-width="3.600"/><path d="M7.300 6.800l9.400 9.400" stroke="#e01010" stroke-width="2.400"/></g>
<g transform="translate(571,59) scale(1)"><path d="M2.500 6.500l5-4h14v13l-5 5h-14z" fill="#c9eef1" stroke="#0a6e78" stroke-width="1.600" stroke-linejoin="round"/><path d="M2.500 6.500h14v14M16.500 6.500l5-4" fill="none" stroke="#0a6e78" stroke-width="1.600"/><path d="M6 9h8v8h-8z" fill="none" stroke="#0a6e78" stroke-width=".8" stroke-dasharray="1.500 1.200"/><path d="M7 8.500l9.500 5-4 .8 3 4.200-1.800 1.200-3-4.300-2.700 3z" fill="#eee" stroke="#333" stroke-width=".9" stroke-linejoin="round"/></g>
<g transform="translate(615,59) scale(1)"><path d="M14.500 14.500l7 7" stroke="#0a6e78" stroke-width="4.600" stroke-linecap="round"/><path d="M14.500 14.500l7 7" stroke="#1cc3d0" stroke-width="2.600" stroke-linecap="round"/><circle cx="9.500" cy="9.500" r="7" fill="#25c9d6" stroke="#0a6e78" stroke-width="4"/><circle cx="9.500" cy="9.500" r="7" fill="none" stroke="#1cc3d0" stroke-width="2.200"/><path d="M5.500 9c.3-2.500 2-4 4.200-4 1.200 0 2 .4 2.800 1l1-1v3.500h-3.500l1.200-1.200c-.5-.4-1-.6-1.600-.6-1.200 0-2.200.900-2.500 2.300zM13.500 10c-.3 2.500-2 4-4.200 4-1.200 0-2-.4-2.800-1l-1 1v-3.500h3.500l-1.200 1.200c.5.400 1 .6 1.600.6 1.200 0 2.200-.900 2.500-2.300z" fill="#fff" stroke="#0a6e78" stroke-width=".5"/></g>
<g transform="translate(660,59) scale(1)"><path d="M13 1.500h4.500v2.500h4l-1 3h-3v2h-3.500l0 0v13.500h-4.500v-9h-5l-1.500-3h6.500v-2.500h-7.500l-1.500-3h9.500v-3.500z" fill="#b9bbb6" stroke="#6e706b" stroke-linejoin="round"/><path d="M11 11h2.500M11 13.500h2.500M11 16h2.500M11 18.500h2.500M11 21h2.500" stroke="#555" stroke-width=".8"/></g>
<g transform="translate(707.5,59) scale(1)"><path d="M3 12.500l5-2.500v-5l5-3 5 2.500v5l4 2v6l-9 4.500-10-4.500z" fill="#edd400" stroke="#8f7d00" stroke-linejoin="round"/><path d="M3 12.500l10 4.500v5.500M13 17l9-4.500M8 5l5 2.500 5-2.500M13 7.500v5l-5-2.500M13 12.500l5-2.500" fill="none" stroke="#8f7d00" stroke-width=".9"/><path d="M8 5l5-3 5 2.500-5 3z" fill="#fce94f"/><path d="M13 12.500l5-2.500 4 2.500-9 4.500-10-4.500 5-2.500z" fill="#fce94f" stroke="#8f7d00" stroke-width=".8" stroke-linejoin="round"/></g>
<g transform="translate(739.5,59) scale(1)"><path d="M1.500 5.500v-3h8l2 2.500h11v17h-21z" fill="#204a87" stroke="#16335f" stroke-linejoin="round"/><path d="M1.500 7.500h21v14.500h-21z" fill="#3b6db3" stroke="#1f3f73"/></g>
<g transform="translate(771,59) scale(1)"><path d="M10 3.500h-4.500c-2 0-3 1-3 3v11c0 2 1 3 3 3h11c2 0 3-1 3-3v-2.500" fill="none" stroke="#16335f" stroke-width="3.600" stroke-linecap="round"/><path d="M10 3.500h-4.500c-2 0-3 1-3 3v11c0 2 1 3 3 3h11c2 0 3-1 3-3v-2.500" fill="none" stroke="#3b6db3" stroke-width="2" stroke-linecap="round"/><path d="M8 15.500c0-6 3-9 8-8.500v-4l6.500 6-6.500 6v-4c-3-.5-5.500.5-8 4.500z" fill="#73d216" stroke="#3a7a04" stroke-linejoin="round"/></g>
<g transform="translate(816.5,59) scale(1)"><path d="M9 2.500c-3.500 0-4 1-4 3.500v3c0 1.500-1 2.500-3 2.500v1c2 0 3 1 3 2.500v3c0 2.500.5 3.500 4 3.500M15 2.500c3.500 0 4 1 4 3.500v3c0 1.500 1 2.500 3 2.500v1c-2 0-3 1-3 2.500v3c0 2.500-.5 3.500-4 3.500" fill="none" stroke="#2e3436" stroke-width="2.200" stroke-linejoin="round"/></g>
<g transform="translate(864,59) scale(1)"><path d="M2.500 1.500l12 10-4.500 1.500 3.500 6.500-3 1.800-3.500-6.800-4 3.500z" fill="#8a8d88" stroke="#555753" stroke-linejoin="round"/><text x="14.500" y="19" font-family="Liberation Sans,sans-serif" font-weight="bold" font-size="20" fill="#3b6db3" stroke="#1f3f73" stroke-width=".5">?</text></g>
<rect x="6.5" y="63" width="1" height="1" fill="#b4b4b4"/><rect x="9.5" y="64.5" width="1" height="1" fill="#b4b4b4"/><rect x="6.5" y="66" width="1" height="1" fill="#b4b4b4"/><rect x="9.5" y="67.5" width="1" height="1" fill="#b4b4b4"/><rect x="6.5" y="69" width="1" height="1" fill="#b4b4b4"/><rect x="9.5" y="70.5" width="1" height="1" fill="#b4b4b4"/><rect x="6.5" y="72" width="1" height="1" fill="#b4b4b4"/><rect x="9.5" y="73.5" width="1" height="1" fill="#b4b4b4"/><rect x="6.5" y="75" width="1" height="1" fill="#b4b4b4"/><rect x="9.5" y="76.5" width="1" height="1" fill="#b4b4b4"/><rect x="6.5" y="78" width="1" height="1" fill="#b4b4b4"/><rect x="9.5" y="79.5" width="1" height="1" fill="#b4b4b4"/>
<rect x="118" y="63" width="1" height="1" fill="#b4b4b4"/><rect x="121" y="64.5" width="1" height="1" fill="#b4b4b4"/><rect x="118" y="66" width="1" height="1" fill="#b4b4b4"/><rect x="121" y="67.5" width="1" height="1" fill="#b4b4b4"/><rect x="118" y="69" width="1" height="1" fill="#b4b4b4"/><rect x="121" y="70.5" width="1" height="1" fill="#b4b4b4"/><rect x="118" y="72" width="1" height="1" fill="#b4b4b4"/><rect x="121" y="73.5" width="1" height="1" fill="#b4b4b4"/><rect x="118" y="75" width="1" height="1" fill="#b4b4b4"/><rect x="121" y="76.5" width="1" height="1" fill="#b4b4b4"/><rect x="118" y="78" width="1" height="1" fill="#b4b4b4"/><rect x="121" y="79.5" width="1" height="1" fill="#b4b4b4"/>
<rect x="236" y="63" width="1" height="1" fill="#b4b4b4"/><rect x="239" y="64.5" width="1" height="1" fill="#b4b4b4"/><rect x="236" y="66" width="1" height="1" fill="#b4b4b4"/><rect x="239" y="67.5" width="1" height="1" fill="#b4b4b4"/><rect x="236" y="69" width="1" height="1" fill="#b4b4b4"/><rect x="239" y="70.5" width="1" height="1" fill="#b4b4b4"/><rect x="236" y="72" width="1" height="1" fill="#b4b4b4"/><rect x="239" y="73.5" width="1" height="1" fill="#b4b4b4"/><rect x="236" y="75" width="1" height="1" fill="#b4b4b4"/><rect x="239" y="76.5" width="1" height="1" fill="#b4b4b4"/><rect x="236" y="78" width="1" height="1" fill="#b4b4b4"/><rect x="239" y="79.5" width="1" height="1" fill="#b4b4b4"/>
<rect x="367" y="63" width="1" height="1" fill="#b4b4b4"/><rect x="370" y="64.5" width="1" height="1" fill="#b4b4b4"/><rect x="367" y="66" width="1" height="1" fill="#b4b4b4"/><rect x="370" y="67.5" width="1" height="1" fill="#b4b4b4"/><rect x="367" y="69" width="1" height="1" fill="#b4b4b4"/><rect x="370" y="70.5" width="1" height="1" fill="#b4b4b4"/><rect x="367" y="72" width="1" height="1" fill="#b4b4b4"/><rect x="370" y="73.5" width="1" height="1" fill="#b4b4b4"/><rect x="367" y="75" width="1" height="1" fill="#b4b4b4"/><rect x="370" y="76.5" width="1" height="1" fill="#b4b4b4"/><rect x="367" y="78" width="1" height="1" fill="#b4b4b4"/><rect x="370" y="79.5" width="1" height="1" fill="#b4b4b4"/>
<rect x="698.5" y="63" width="1" height="1" fill="#b4b4b4"/><rect x="701.5" y="64.5" width="1" height="1" fill="#b4b4b4"/><rect x="698.5" y="66" width="1" height="1" fill="#b4b4b4"/><rect x="701.5" y="67.5" width="1" height="1" fill="#b4b4b4"/><rect x="698.5" y="69" width="1" height="1" fill="#b4b4b4"/><rect x="701.5" y="70.5" width="1" height="1" fill="#b4b4b4"/><rect x="698.5" y="72" width="1" height="1" fill="#b4b4b4"/><rect x="701.5" y="73.5" width="1" height="1" fill="#b4b4b4"/><rect x="698.5" y="75" width="1" height="1" fill="#b4b4b4"/><rect x="701.5" y="76.5" width="1" height="1" fill="#b4b4b4"/><rect x="698.5" y="78" width="1" height="1" fill="#b4b4b4"/><rect x="701.5" y="79.5" width="1" height="1" fill="#b4b4b4"/>
<rect x="854.5" y="63" width="1" height="1" fill="#b4b4b4"/><rect x="857.5" y="64.5" width="1" height="1" fill="#b4b4b4"/><rect x="854.5" y="66" width="1" height="1" fill="#b4b4b4"/><rect x="857.5" y="67.5" width="1" height="1" fill="#b4b4b4"/><rect x="854.5" y="69" width="1" height="1" fill="#b4b4b4"/><rect x="857.5" y="70.5" width="1" height="1" fill="#b4b4b4"/><rect x="854.5" y="72" width="1" height="1" fill="#b4b4b4"/><rect x="857.5" y="73.5" width="1" height="1" fill="#b4b4b4"/><rect x="854.5" y="75" width="1" height="1" fill="#b4b4b4"/><rect x="857.5" y="76.5" width="1" height="1" fill="#b4b4b4"/><rect x="854.5" y="78" width="1" height="1" fill="#b4b4b4"/><rect x="857.5" y="79.5" width="1" height="1" fill="#b4b4b4"/>
<path d="M469 69h7l-3.500 4z" fill="#8a8a8a"/>
<path d="M555 69h7l-3.500 4z" fill="#8a8a8a"/>
<path d="M600 69h7l-3.500 4z" fill="#8a8a8a"/>
<path d="M645 69h7l-3.500 4z" fill="#8a8a8a"/>
<path d="M801 69h7l-3.500 4z" fill="#8a8a8a"/>
<rect x="191.3" y="61.5" width="1.500" height="19" fill="#9a9a9a"/>
<rect x="517.3" y="61.5" width="1.500" height="19" fill="#9a9a9a"/>
<g transform="translate(16,98) scale(1)"><rect x="1.500" y="3.500" width="21" height="18" fill="#fff" stroke="#4e9a06" stroke-width="1.400"/><path d="M13 13h-6v-2.500h9M16 8h-10.500c-1.500 0-2 .5-2 2v6c0 1.500.5 2 2 2h9" fill="none" stroke="#3a7a04" stroke-width="3" stroke-linecap="round" stroke-linejoin="round"/><path d="M13 13h-6v-2.500h9M16 8h-10.500c-1.500 0-2 .5-2 2v6c0 1.500.5 2 2 2h9" fill="none" stroke="#73d216" stroke-width="1.6" stroke-linecap="round" stroke-linejoin="round"/><path d="M15.5 1h6.5v13.94l-3.25 3.06l-3.25 -3.06z" fill="#d3d7cf" stroke="#555753" stroke-width=".9" stroke-linejoin="round"/><path d="M16.1 6.615L21.4 3.04" stroke="#2e3436" stroke-width="1.5"/><path d="M16.1 10.695L21.4 7.12" stroke="#2e3436" stroke-width="1.5"/><path d="M16.1 14.775L21.4 11.2" stroke="#2e3436" stroke-width="1.5"/></g>
<g transform="translate(48,98) scale(1)"><rect x="1.500" y="3.500" width="21" height="18" fill="#f6f6f6" stroke="#b5b5b5" stroke-width="1.200"/><path d="M15 13h-8v-2.500h10M18 8h-12.500c-1.500 0-2 .5-2 2v6c0 1.500.5 2 2 2h9" fill="none" stroke="#8c8c8c" stroke-width="2.8" stroke-linecap="round" stroke-linejoin="round"/><path d="M15 13h-8v-2.500h10M18 8h-12.500c-1.500 0-2 .5-2 2v6c0 1.500.5 2 2 2h9" fill="none" stroke="#d0d0d0" stroke-width="1.4" stroke-linecap="round" stroke-linejoin="round"/><path d="M15.500 13.500h4v4h2.500l-4.500 5-4.500-5h2.500z" fill="#aaa" stroke="#888" stroke-width=".8"/></g>
<g transform="translate(80,98) scale(1)"><path d="M5 21.500c.5-2.500 0-3.500-2-4l-1.500-.8 2-3.700c-.5-5 1.500-10.500 9-11 6-.3 10 3.500 10 8.500 0 4-2.500 7-6 8v3.500z" fill="#a8a8a8" stroke="#8a8a8a" stroke-linejoin="round"/><path d="M9 12c-2.500-3 0-7 4.500-7 3.500 0 6 2 6 5 0 2.500-2 4-4.500 4-1.500 0-2-1-2-2" fill="none" stroke="#8a8a8a" stroke-width="1.300"/></g>
<g transform="translate(127,98) scale(1)"><path d="M3.500 21v-8c0-3 1.500-4.500 4-4.500h1" fill="none" stroke="#8c8c8c" stroke-width="3.6" stroke-linecap="round" stroke-linejoin="round"/><path d="M3.500 21v-8c0-3 1.500-4.500 4-4.500h1" fill="none" stroke="#d0d0d0" stroke-width="2.2" stroke-linecap="round" stroke-linejoin="round"/><path d="M15 1h6.5v12.3l-3.25 2.7l-3.25 -2.7z" fill="#d0d0d0" stroke="#8a8a8a" stroke-width=".9" stroke-linejoin="round"/><path d="M15.6 6.375L20.9 2.8" stroke="#8a8a8a" stroke-width="1.5"/><path d="M15.6 9.975L20.9 6.4" stroke="#8a8a8a" stroke-width="1.5"/><path d="M15.6 13.575L20.9 10" stroke="#8a8a8a" stroke-width="1.5"/><circle cx="11" cy="13" r="4.300" fill="#e2e2e2" stroke="#b0b0b0" stroke-width="1.400"/><path d="M14 16.500l4.500 4.500" stroke="#b8b8b8" stroke-width="2.200" stroke-linecap="round"/></g>
<g transform="translate(159,98) scale(1)"><path d="M3 2.500h9v9h-3v7h-6z" fill="#babdb6" stroke="#6e706b" stroke-width=".9"/><rect x="12" y="2" width="7" height="7" fill="#d3d7cf" stroke="#6e706b" stroke-width=".9"/><path d="M13.500 9h4v4.500l-2 3-2-3z" fill="#888a85" stroke="#555" stroke-width=".7"/><path d="M13 10.500h5M13 12h5" stroke="#333" stroke-width=".7"/><rect x="2" y="18.500" width="20" height="3" fill="#888a85" stroke="#555753" stroke-width=".8"/><circle cx="7" cy="13.500" r="4.600" fill="#9cbce6" stroke="#d8dee8" stroke-width="1.500"/><circle cx="7" cy="13.500" r="3.400" fill="#729fcf" opacity=".8"/><path d="M10 17l4.500 4.500" stroke="#9a9c98" stroke-width="2.200" stroke-linecap="round"/></g>
<g transform="translate(191,98) scale(1)"><path d="M3 2.500h9v9h-3v7h-6z" fill="#babdb6" stroke="#6e706b" stroke-width=".9"/><rect x="12" y="2" width="7" height="7" fill="#d3d7cf" stroke="#6e706b" stroke-width=".9"/><path d="M13.500 9h4v4.500l-2 3-2-3z" fill="#888a85" stroke="#555" stroke-width=".7"/><path d="M13 10.500h5M13 12h5" stroke="#333" stroke-width=".7"/><rect x="2" y="18.500" width="20" height="3" fill="#888a85" stroke="#555753" stroke-width=".8"/><circle cx="9" cy="13.500" r="4.600" fill="#9cbce6" stroke="#d8dee8" stroke-width="1.500"/><circle cx="9" cy="13.500" r="3.400" fill="#729fcf" opacity=".8"/><path d="M12 17l4.500 4.500" stroke="#9a9c98" stroke-width="2.200" stroke-linecap="round"/></g>
<g transform="translate(223,98) scale(1)"><rect x="1.500" y="2.500" width="21" height="20" fill="#a9a9a9" stroke="#8c8c8c"/><rect x="4.500" y="5.500" width="15" height="14" fill="#9e9e9e" stroke="#919191" stroke-width=".8"/><rect x="10" y="2.500" width="5" height="2" fill="#ccc"/><rect x="20" y="11" width="1.500" height="3" fill="#ccc"/></g>
<g transform="translate(255,98) scale(1)"><circle cx="12" cy="12" r="10" fill="#b9b9b9" stroke="#9a9a9a"/><circle cx="12" cy="12" r="6.800" fill="none" stroke="#dedede" stroke-width="1.600" stroke-dasharray="3.500 1.800"/></g>
<g transform="translate(287,98) scale(1)"><path d="M2.5 4.5h5v13.94l-2.5 3.06l-2.5 -3.06z" fill="#d3d7cf" stroke="#555753" stroke-width=".9" stroke-linejoin="round"/><path d="M3.1 9.29L6.9 6.54" stroke="#2e3436" stroke-width="1.5"/><path d="M3.1 13.37L6.9 10.62" stroke="#2e3436" stroke-width="1.5"/><path d="M3.1 17.45L6.9 14.7" stroke="#2e3436" stroke-width="1.5"/><path d="M9.5 2h5v13.94l-2.5 3.06l-2.5 -3.06z" fill="#d3d7cf" stroke="#555753" stroke-width=".9" stroke-linejoin="round"/><path d="M10.1 6.79L13.9 4.04" stroke="#2e3436" stroke-width="1.5"/><path d="M10.1 10.87L13.9 8.12" stroke="#2e3436" stroke-width="1.5"/><path d="M10.1 14.95L13.9 12.2" stroke="#2e3436" stroke-width="1.5"/><path d="M16.5 4.5h5v13.94l-2.5 3.06l-2.5 -3.06z" fill="#d3d7cf" stroke="#555753" stroke-width=".9" stroke-linejoin="round"/><path d="M17.1 9.29L20.9 6.54" stroke="#2e3436" stroke-width="1.5"/><path d="M17.1 13.37L20.9 10.62" stroke="#2e3436" stroke-width="1.5"/><path d="M17.1 17.45L20.9 14.7" stroke="#2e3436" stroke-width="1.5"/></g>
<g transform="translate(334,98) scale(1)"><path d="M6 6l12-3v5l-12 3zM6 12l12-3v4l-12 3zM6 17l14-3.500v5.500l-14 3z" fill="#3b6db3" stroke="#1f3f73" stroke-linejoin="round"/><path d="M9 3.500l-6.500 12.500c-.8 1.500 0 2.500 1.500 2.800l10 2.200c1.500.3 2.500-.3 3-1.500" fill="none" stroke="#3a7a04" stroke-width="3.8" stroke-linecap="round" stroke-linejoin="round"/><path d="M9 3.500l-6.500 12.500c-.8 1.500 0 2.500 1.500 2.800l10 2.200c1.500.3 2.500-.3 3-1.500" fill="none" stroke="#73d216" stroke-width="2.4" stroke-linecap="round" stroke-linejoin="round"/><path d="M15.5 1h6.5v13.12l-3.25 2.88l-3.25 -2.88z" fill="#d3d7cf" stroke="#555753" stroke-width=".9" stroke-linejoin="round"/><path d="M16.1 6.495L21.4 2.92" stroke="#2e3436" stroke-width="1.5"/><path d="M16.1 10.335L21.4 6.76" stroke="#2e3436" stroke-width="1.5"/><path d="M16.1 14.175L21.4 10.6" stroke="#2e3436" stroke-width="1.5"/></g>
<g transform="translate(366,98) scale(1)"><path d="M1.500 3.500h21v19h-21z" fill="#3b6db3" stroke="#1f3f73" stroke-linejoin="round"/><path d="M1.500 3.500l8 8h13M9.500 11.500v11" stroke="#1f3f73" stroke-width=".8" fill="none"/><path d="M22 13h-7l-9 4.500h8M8 22l14-4" fill="none" stroke="#3a7a04" stroke-width="3.2" stroke-linecap="round" stroke-linejoin="round"/><path d="M22 13h-7l-9 4.500h8M8 22l14-4" fill="none" stroke="#73d216" stroke-width="1.8" stroke-linecap="round" stroke-linejoin="round"/><path d="M12.5 1h6.5v12.3l-3.25 2.7l-3.25 -2.7z" fill="#d3d7cf" stroke="#555753" stroke-width=".9" stroke-linejoin="round"/><path d="M13.1 6.375L18.4 2.8" stroke="#2e3436" stroke-width="1.5"/><path d="M13.1 9.975L18.4 6.4" stroke="#2e3436" stroke-width="1.5"/><path d="M13.1 13.575L18.4 10" stroke="#2e3436" stroke-width="1.5"/></g>
<g transform="translate(398,98) scale(1)"><path d="M1.500 9.500h21v13h-21z" fill="#3b6db3" stroke="#1f3f73" stroke-linejoin="round"/><path d="M9 22.500c0-3 1.500-4.500 3.200-4.500s3.300 1.500 3.300 4.500z" fill="#fff" stroke="#1f3f73" stroke-width=".7"/><path d="M9 1h6.5v14.76l-3.25 3.24l-3.25 -3.24z" fill="#d3d7cf" stroke="#555753" stroke-width=".9" stroke-linejoin="round"/><path d="M9.6 6.735L14.9 3.16" stroke="#2e3436" stroke-width="1.5"/><path d="M9.6 11.055L14.9 7.48" stroke="#2e3436" stroke-width="1.5"/><path d="M9.6 15.375L14.9 11.8" stroke="#2e3436" stroke-width="1.5"/><circle cx="12.200" cy="20" r="1.300" fill="#73d216"/></g>
<g transform="translate(430,98) scale(1)"><path d="M1.500 3.500h21v19h-21z" fill="#3b6db3" stroke="#1f3f73" stroke-linejoin="round"/><path d="M19 6.500h-13.500v4.500h11M16.500 11h-11v4.500h11M5.500 20h14" fill="none" stroke="#3a7a04" stroke-width="3" stroke-linecap="round" stroke-linejoin="round"/><path d="M19 6.500h-13.500v4.500h11M16.500 11h-11v4.500h11M5.500 20h14" fill="none" stroke="#73d216" stroke-width="1.6" stroke-linecap="round" stroke-linejoin="round"/><path d="M15.5 1h6.5v13.12l-3.25 2.88l-3.25 -2.88z" fill="#d3d7cf" stroke="#555753" stroke-width=".9" stroke-linejoin="round"/><path d="M16.1 6.495L21.4 2.92" stroke="#2e3436" stroke-width="1.5"/><path d="M16.1 10.335L21.4 6.76" stroke="#2e3436" stroke-width="1.5"/><path d="M16.1 14.175L21.4 10.6" stroke="#2e3436" stroke-width="1.5"/></g>
<g transform="translate(462,98) scale(1)"><path d="M3 4c4-3 13-2 14 1.500 1 3.500-13 5.500-13 10 0 4 9 5.500 17 2.500" fill="none" stroke="#3a7a04" stroke-width="3.8" stroke-linecap="round" stroke-linejoin="round"/><path d="M3 4c4-3 13-2 14 1.500 1 3.500-13 5.500-13 10 0 4 9 5.500 17 2.500" fill="none" stroke="#73d216" stroke-width="2.4" stroke-linecap="round" stroke-linejoin="round"/><path d="M13.5 2h6.5v12.3l-3.25 2.7l-3.25 -2.7z" fill="#d3d7cf" stroke="#555753" stroke-width=".9" stroke-linejoin="round"/><path d="M14.1 7.375L19.4 3.8" stroke="#2e3436" stroke-width="1.5"/><path d="M14.1 10.975L19.4 7.4" stroke="#2e3436" stroke-width="1.5"/><path d="M14.1 14.575L19.4 11" stroke="#2e3436" stroke-width="1.5"/></g>
<g transform="translate(494,98) scale(1)"><path d="M18 4h-8l-7.500 12.500 2.500 3.500h11l5-5.500" fill="none" stroke="#3a7a04" stroke-width="3.8" stroke-linecap="round" stroke-linejoin="round"/><path d="M18 4h-8l-7.500 12.500 2.500 3.500h11l5-5.500" fill="none" stroke="#73d216" stroke-width="2.4" stroke-linecap="round" stroke-linejoin="round"/><text x="7.500" y="17.500" font-family="Liberation Sans,sans-serif" font-weight="bold" font-size="12" fill="#aaa" stroke="#777" stroke-width=".5">A</text></g>
<g transform="translate(526,98) scale(1)"><path d="M1.500 2.500h21v20h-21z" fill="#3b6db3" stroke="#1f3f73" stroke-linejoin="round"/><path d="M1.500 10l14 9h7" fill="none" stroke="#1f3f73" stroke-width=".8"/><path d="M2.500 11.500l12 6" fill="none" stroke="#3a7a04" stroke-width="3.4" stroke-linecap="round" stroke-linejoin="round"/><path d="M2.500 11.500l12 6" fill="none" stroke="#73d216" stroke-width="2" stroke-linecap="round" stroke-linejoin="round"/><path d="M14 1h7v12.3l-3.5 2.7l-3.5 -2.7z" fill="#d3d7cf" stroke="#555753" stroke-width=".9" stroke-linejoin="round"/><path d="M14.6 6.65L20.4 2.8" stroke="#2e3436" stroke-width="1.5"/><path d="M14.6 10.25L20.4 6.4" stroke="#2e3436" stroke-width="1.5"/><path d="M14.6 13.85L20.4 10" stroke="#2e3436" stroke-width="1.5"/></g>
<g transform="translate(571,98) scale(1)"><path d="M18 1h5v11l-2.5 0l-2.5 0z" fill="#d3d7cf" stroke="#555753" stroke-width=".9" stroke-linejoin="round"/><path d="M18.6 5.07L22.4 2.32" stroke="#2e3436" stroke-width="1.5"/><path d="M18.6 7.71L22.4 4.96" stroke="#2e3436" stroke-width="1.5"/><path d="M18.6 10.35L22.4 7.6" stroke="#2e3436" stroke-width="1.5"/><path d="M2 13c3 0 4-4.500 8-4.500s5 4.500 8 4.500h4v3c0 5-5 6.500-10 6.500s-10-1.500-10-6.500z" fill="#3b6db3" stroke="#1f3f73"/><path d="M20 13.500h-3c-2 0-2.500 4.500-7 4.500-3 0-4.500-2-5.500-3.500M3 12.500l1 3 3.500-1.500" fill="none" stroke="#3a7a04" stroke-width="3.4" stroke-linecap="round" stroke-linejoin="round"/><path d="M20 13.500h-3c-2 0-2.500 4.500-7 4.500-3 0-4.500-2-5.500-3.500M3 12.500l1 3 3.500-1.500" fill="none" stroke="#73d216" stroke-width="2" stroke-linecap="round" stroke-linejoin="round"/></g>
<g transform="translate(631,98) scale(1)"><path d="M14 3.500h-6l-5.500 10 3 3h10l4-5M17 8h-6l-5 9 3 3.500h9l4-5" fill="none" stroke="#8c8c8c" stroke-width="3" stroke-linecap="round" stroke-linejoin="round"/><path d="M14 3.500h-6l-5.500 10 3 3h10l4-5M17 8h-6l-5 9 3 3.500h9l4-5" fill="none" stroke="#d0d0d0" stroke-width="1.6" stroke-linecap="round" stroke-linejoin="round"/></g>
<g transform="translate(663,98) scale(1)"><path d="M3 5l3 3.500h10l5-4.500M3 10.500l3 3.500h10l5-4.500M3 16l3 3.500h10l5-4.500" fill="none" stroke="#8c8c8c" stroke-width="3" stroke-linecap="round" stroke-linejoin="round"/><path d="M3 5l3 3.500h10l5-4.500M3 10.500l3 3.500h10l5-4.500M3 16l3 3.500h10l5-4.500" fill="none" stroke="#d0d0d0" stroke-width="1.6" stroke-linecap="round" stroke-linejoin="round"/></g>
<g transform="translate(695,98) scale(1)"><path d="M11 3l2 4c.5 1.500 0 2.500-1 3.500l-3 3c-1 1 0 2.500 1 2.500h8M3.500 8l2.500 4c.5 1.500 0 2.500-1 3.500l-2 2.500c-1 1.500 0 3 1.500 3h7" fill="none" stroke="#8c8c8c" stroke-width="2.9" stroke-linecap="round" stroke-linejoin="round"/><path d="M11 3l2 4c.5 1.500 0 2.500-1 3.500l-3 3c-1 1 0 2.500 1 2.500h8M3.500 8l2.500 4c.5 1.500 0 2.500-1 3.500l-2 2.500c-1 1.500 0 3 1.500 3h7" fill="none" stroke="#d0d0d0" stroke-width="1.5" stroke-linecap="round" stroke-linejoin="round"/></g>
<rect x="6.5" y="102" width="1" height="1" fill="#b4b4b4"/><rect x="9.5" y="103.5" width="1" height="1" fill="#b4b4b4"/><rect x="6.5" y="105" width="1" height="1" fill="#b4b4b4"/><rect x="9.5" y="106.5" width="1" height="1" fill="#b4b4b4"/><rect x="6.5" y="108" width="1" height="1" fill="#b4b4b4"/><rect x="9.5" y="109.5" width="1" height="1" fill="#b4b4b4"/><rect x="6.5" y="111" width="1" height="1" fill="#b4b4b4"/><rect x="9.5" y="112.5" width="1" height="1" fill="#b4b4b4"/><rect x="6.5" y="114" width="1" height="1" fill="#b4b4b4"/><rect x="9.5" y="115.5" width="1" height="1" fill="#b4b4b4"/><rect x="6.5" y="117" width="1" height="1" fill="#b4b4b4"/><rect x="9.5" y="118.5" width="1" height="1" fill="#b4b4b4"/>
<rect x="118" y="102" width="1" height="1" fill="#b4b4b4"/><rect x="121" y="103.5" width="1" height="1" fill="#b4b4b4"/><rect x="118" y="105" width="1" height="1" fill="#b4b4b4"/><rect x="121" y="106.5" width="1" height="1" fill="#b4b4b4"/><rect x="118" y="108" width="1" height="1" fill="#b4b4b4"/><rect x="121" y="109.5" width="1" height="1" fill="#b4b4b4"/><rect x="118" y="111" width="1" height="1" fill="#b4b4b4"/><rect x="121" y="112.5" width="1" height="1" fill="#b4b4b4"/><rect x="118" y="114" width="1" height="1" fill="#b4b4b4"/><rect x="121" y="115.5" width="1" height="1" fill="#b4b4b4"/><rect x="118" y="117" width="1" height="1" fill="#b4b4b4"/><rect x="121" y="118.5" width="1" height="1" fill="#b4b4b4"/>
<rect x="325" y="102" width="1" height="1" fill="#b4b4b4"/><rect x="328" y="103.5" width="1" height="1" fill="#b4b4b4"/><rect x="325" y="105" width="1" height="1" fill="#b4b4b4"/><rect x="328" y="106.5" width="1" height="1" fill="#b4b4b4"/><rect x="325" y="108" width="1" height="1" fill="#b4b4b4"/><rect x="328" y="109.5" width="1" height="1" fill="#b4b4b4"/><rect x="325" y="111" width="1" height="1" fill="#b4b4b4"/><rect x="328" y="112.5" width="1" height="1" fill="#b4b4b4"/><rect x="325" y="114" width="1" height="1" fill="#b4b4b4"/><rect x="328" y="115.5" width="1" height="1" fill="#b4b4b4"/><rect x="325" y="117" width="1" height="1" fill="#b4b4b4"/><rect x="328" y="118.5" width="1" height="1" fill="#b4b4b4"/>
<rect x="620.5" y="102" width="1" height="1" fill="#b4b4b4"/><rect x="623.5" y="103.5" width="1" height="1" fill="#b4b4b4"/><rect x="620.5" y="105" width="1" height="1" fill="#b4b4b4"/><rect x="623.5" y="106.5" width="1" height="1" fill="#b4b4b4"/><rect x="620.5" y="108" width="1" height="1" fill="#b4b4b4"/><rect x="623.5" y="109.5" width="1" height="1" fill="#b4b4b4"/><rect x="620.5" y="111" width="1" height="1" fill="#b4b4b4"/><rect x="623.5" y="112.5" width="1" height="1" fill="#b4b4b4"/><rect x="620.5" y="114" width="1" height="1" fill="#b4b4b4"/><rect x="623.5" y="115.5" width="1" height="1" fill="#b4b4b4"/><rect x="620.5" y="117" width="1" height="1" fill="#b4b4b4"/><rect x="623.5" y="118.5" width="1" height="1" fill="#b4b4b4"/>
<path d="M555 108h7l-3.500 4z" fill="#8a8a8a"/>
<path d="M600 108h7l-3.500 4z" fill="#8a8a8a"/>
<g transform="translate(249,63.500) scale(.667)"><rect x="5" y="2" width="14" height="5" fill="#a9aca6" stroke="#6e706b" stroke-width=".8"/><rect x="8.500" y="7" width="7" height="3" fill="#888a85"/><path d="M9 9.5h6v7.38l-3 1.62l-3 -1.62z" fill="#d3d7cf" stroke="#555753" stroke-width=".9" stroke-linejoin="round"/><path d="M9.6 13.88L14.4 10.58" stroke="#2e3436" stroke-width="1.5"/><path d="M9.6 16.04L14.4 12.74" stroke="#2e3436" stroke-width="1.5"/><path d="M9.6 18.2L14.4 14.9" stroke="#2e3436" stroke-width="1.5"/><path d="M2 17.500h7v3h6v-3h7v4.500h-20z" fill="#e9b96e" stroke="#b0803a" stroke-width=".8"/></g>
<path d="M339.5 69.5h7l-3.500 4z" fill="#8a8a8a"/>
<path d="M6.5 177.5h9l-4.500 5z" fill="#111"/>
<g transform="translate(26,172)"><path d="M2.500 .500h7.500l3.500 3.500v11.500h-11z" fill="#fafafa" stroke="#777" stroke-width=".9"/><path d="M10 .500v3.500h3.500" fill="#ddd" stroke="#777" stroke-width=".8"/><path d="M4 8.500l3-1.500 3 1.500v4l-3 1.500-3-1.500z" fill="#3465a4" stroke="#16335f" stroke-width=".7"/><circle cx="9.500" cy="6.500" r="2.300" fill="#d01818" stroke="#7a0000" stroke-width=".6"/></g>
<path d="M26.5 195.5h9l-4.500 5z" fill="#111"/>
<g transform="translate(45.4,192.8) scale(.88)"><path d="M1 6c2.200-3 4.400-4.200 6.500-4.200s4.300 1.200 6.500 4.200c-2.200 3-4.400 4.200-6.500 4.200s-4.300-1.200-6.500-4.200z" fill="none" stroke="#9a9a9a" stroke-width="1"/><circle cx="7.500" cy="6" r="2.200" fill="none" stroke="#9a9a9a" stroke-width="1"/><path d="M3 .800l9.500 10.500" stroke="#9a9a9a" stroke-width="1.100"/></g>
<g transform="translate(64.2,190)"><path d="M1.500 7l4-2v-3l4-1.500 4 2v4l1.500 1v5l-6 3-7.500-3.500z" fill="#a0a0a0" stroke="#8a8a8a" stroke-width=".8" stroke-linejoin="round"/><path d="M5.500 5l4 2 4-1.500M9.500 7v4.500l5.500-3M1.500 7l7.500 4" fill="none" stroke="#8a8a8a" stroke-width=".7"/></g>
<path d="M48.5 211.5v9l5-4.500z" fill="#111"/>
<g transform="translate(65.4,210.8) scale(.88)"><path d="M1 6c2.200-3 4.400-4.200 6.500-4.200s4.300 1.200 6.500 4.200c-2.200 3-4.400 4.200-6.500 4.200s-4.300-1.200-6.500-4.200z" fill="none" stroke="#9a9a9a" stroke-width="1"/><circle cx="7.500" cy="6" r="2.200" fill="none" stroke="#9a9a9a" stroke-width="1"/><path d="M3 .800l9.500 10.500" stroke="#9a9a9a" stroke-width="1.100"/></g>
<g transform="translate(84.2,208)"><path d="M6.500 1v8.500l-5 5M6.500 9.500l8 2" fill="none" stroke="#9a9a9a" stroke-width="2" stroke-linecap="round"/></g>
<path d="M48.5 229.5v9l5-4.500z" fill="#111"/>
<g transform="translate(65.4,228.8) scale(.88)"><path d="M1 6c2.200-3 4.400-4.200 6.500-4.200s4.300 1.200 6.500 4.200c-2.200 3-4.400 4.200-6.500 4.200s-4.300-1.200-6.500-4.200z" fill="none" stroke="#9a9a9a" stroke-width="1"/><circle cx="7.500" cy="6" r="2.200" fill="none" stroke="#9a9a9a" stroke-width="1"/><path d="M3 .800l9.500 10.500" stroke="#9a9a9a" stroke-width="1.100"/></g>
<g transform="translate(84.2,226)"><path d="M1.500 12l3-2h8l3 2-3 2.500h-8z" fill="#e8e8e8" stroke="#8a8a8a" stroke-width=".8"/><path d="M2.500 3.500l3-2h7l2.500 2v5.500l-3 1.500h-7l-2.500-1.500z" fill="#b4b4b4" stroke="#8a8a8a" stroke-width=".8"/><path d="M2.500 3.500l2.500 1.500h7l3-1.500M5 5v5.500M12 5v5.500" fill="none" stroke="#8a8a8a" stroke-width=".7"/></g>
<path d="M48.5 247.5v9l5-4.500z" fill="#111"/>
<g transform="translate(65.4,246.8) scale(.88)"><path d="M.8 6c2.200-3.200 4.500-4.500 6.700-4.500s4.500 1.300 6.700 4.500c-2.200 3.200-4.500 4.500-6.700 4.500s-4.500-1.300-6.700-4.500z" fill="#fff" stroke="#111" stroke-width="1.300"/><circle cx="7.500" cy="5.800" r="2.700" fill="#111"/><circle cx="6.600" cy="4.800" r=".9" fill="#fff"/></g>
<g transform="translate(84.2,244)"><path d="M1 7.500l6.500-5 8 2v6.500l-7 4.500-7.500-2.500z" fill="#3b6db3" stroke="#16335f" stroke-width=".8" stroke-linejoin="round"/><path d="M1 7.500l7.500 2 7-5M8.500 9.500v6" fill="none" stroke="#16335f" stroke-width=".7"/><path d="M5 6.500l3.500-2.500 4.500 1-3.500 2.800z" fill="#d01818" stroke="#7a0000" stroke-width=".6"/><circle cx="12" cy="12" r="3.600" fill="#4eb81e" stroke="#fff" stroke-width=".6"/><path d="M12 9.800v3.800M10.300 12.200l1.700 1.800 1.700-1.800" stroke="#fff" stroke-width="1.100" fill="none"/></g>
<path d="M26.5 267.5h9l-4.500 5z" fill="#111"/>
<g transform="translate(45.4,264.8) scale(.88)"><path d="M.8 6c2.200-3.200 4.500-4.500 6.700-4.500s4.500 1.300 6.700 4.500c-2.200 3.200-4.500 4.500-6.700 4.500s-4.500-1.300-6.700-4.500z" fill="#fff" stroke="#111" stroke-width="1.300"/><circle cx="7.500" cy="5.800" r="2.700" fill="#111"/><circle cx="6.600" cy="4.800" r=".9" fill="#fff"/></g>
<g transform="translate(64.2,262)"><rect x="1" y="2.500" width="14" height="12.500" fill="#eaf6dc" stroke="#4e9a06" stroke-width="1"/><path d="M9 9.500h-4v-2h6M11 5.500h-7c-1 0-1.300.3-1.300 1.300v4.400c0 1 .3 1.300 1.300 1.300h6" fill="none" stroke="#3a7a04" stroke-width="2.3" stroke-linecap="round" stroke-linejoin="round"/><path d="M9 9.500h-4v-2h6M11 5.500h-7c-1 0-1.300.3-1.300 1.300v4.400c0 1 .3 1.300 1.300 1.300h6" fill="none" stroke="#73d216" stroke-width="0.9" stroke-linecap="round" stroke-linejoin="round"/><path d="M10.5 0.5h4.5v9.84l-2.25 2.16l-2.25 -2.16z" fill="#d3d7cf" stroke="#555753" stroke-width=".9" stroke-linejoin="round"/><path d="M11.1 4.415L14.4 1.94" stroke="#2e3436" stroke-width="1.5"/><path d="M11.1 7.295L14.4 4.82" stroke="#2e3436" stroke-width="1.5"/><path d="M11.1 10.175L14.4 7.7" stroke="#2e3436" stroke-width="1.5"/></g>
<path d="M46.5 285.5h9l-4.500 5z" fill="#111"/>
<g transform="translate(65.4,282.8) scale(.88)"><path d="M.8 6c2.200-3.200 4.500-4.500 6.700-4.500s4.500 1.300 6.700 4.500c-2.200 3.200-4.500 4.500-6.700 4.500s-4.500-1.300-6.700-4.500z" fill="#fff" stroke="#111" stroke-width="1.300"/><circle cx="7.500" cy="5.800" r="2.700" fill="#111"/><circle cx="6.600" cy="4.800" r=".9" fill="#fff"/></g>
<g transform="translate(84.2,280)"><path d="M1 3.500v-2.500h5.500l1.500 2h7v12h-14z" fill="#204a87" stroke="#16335f" stroke-width=".8" stroke-linejoin="round"/><path d="M1 5h14v10h-14z" fill="#3b6db3" stroke="#1f3f73" stroke-width=".8"/></g>
<g transform="translate(85.4,300.8) scale(.88)"><path d="M1 6c2.200-3 4.400-4.200 6.500-4.200s4.300 1.200 6.500 4.200c-2.200 3-4.400 4.200-6.500 4.200s-4.300-1.200-6.500-4.200z" fill="none" stroke="#9a9a9a" stroke-width="1"/><circle cx="7.500" cy="6" r="2.200" fill="none" stroke="#9a9a9a" stroke-width="1"/><path d="M3 .800l9.500 10.500" stroke="#9a9a9a" stroke-width="1.100"/></g>
<g transform="translate(104.2,298)"><rect x="1" y="2.500" width="14" height="13" fill="#b0b0b0" stroke="#8e8e8e" stroke-width=".8"/><path d="M14 9h-5l-6 3h5M5 15l9-3" stroke="#dcdcdc" stroke-width="1.200" fill="none"/><path d="M8.5 0.5h4.5v8.61l-2.25 1.89l-2.25 -1.89z" fill="#d0d0d0" stroke="#8a8a8a" stroke-width=".9" stroke-linejoin="round"/><path d="M9.1 4.235L12.4 1.76" stroke="#8a8a8a" stroke-width="1.5"/><path d="M9.1 6.755L12.4 4.28" stroke="#8a8a8a" stroke-width="1.5"/><path d="M9.1 9.275L12.4 6.8" stroke="#8a8a8a" stroke-width="1.5"/></g>
<g transform="translate(85.4,318.8) scale(.88)"><path d="M1 6c2.200-3 4.400-4.200 6.500-4.200s4.300 1.200 6.500 4.200c-2.200 3-4.400 4.200-6.500 4.200s-4.300-1.200-6.500-4.200z" fill="none" stroke="#9a9a9a" stroke-width="1"/><circle cx="7.500" cy="6" r="2.200" fill="none" stroke="#9a9a9a" stroke-width="1"/><path d="M3 .800l9.500 10.500" stroke="#9a9a9a" stroke-width="1.100"/></g>
<g transform="translate(104.2,316)"><rect x="1" y="2.500" width="14" height="13" fill="#b0b0b0" stroke="#8e8e8e" stroke-width=".8"/><path d="M12 5h-8.500v3h7M10.500 8h-7v3h7M3.500 13.500h9" stroke="#dcdcdc" stroke-width="1.200" fill="none"/><path d="M10.5 0.5h4.5v9.02l-2.25 1.98l-2.25 -1.98z" fill="#d0d0d0" stroke="#8a8a8a" stroke-width=".9" stroke-linejoin="round"/><path d="M11.1 4.295L14.4 1.82" stroke="#8a8a8a" stroke-width="1.5"/><path d="M11.1 6.935L14.4 4.46" stroke="#8a8a8a" stroke-width="1.5"/><path d="M11.1 9.575L14.4 7.1" stroke="#8a8a8a" stroke-width="1.5"/></g>
<path d="M66.5 339.5h9l-4.500 5z" fill="#111"/>
<g transform="translate(85.4,336.8) scale(.88)"><path d="M.8 6c2.200-3.200 4.500-4.500 6.700-4.500s4.500 1.300 6.700 4.500c-2.200 3.200-4.500 4.500-6.700 4.500s-4.500-1.300-6.700-4.500z" fill="#fff" stroke="#111" stroke-width="1.300"/><circle cx="7.500" cy="5.800" r="2.700" fill="#111"/><circle cx="6.600" cy="4.800" r=".9" fill="#fff"/></g>
<g transform="translate(104.2,334)"><path d="M4 1.500c2 2 3 4 1 6.500s-3 4.500-1 5.500c2 1 6 .5 8-1" fill="none" stroke="#3a7a04" stroke-width="2.9" stroke-linecap="round" stroke-linejoin="round"/><path d="M4 1.500c2 2 3 4 1 6.500s-3 4.500-1 5.500c2 1 6 .5 8-1" fill="none" stroke="#73d216" stroke-width="1.5" stroke-linecap="round" stroke-linejoin="round"/><path d="M10 1.5h4.5v9.02l-2.25 1.98l-2.25 -1.98z" fill="#d3d7cf" stroke="#555753" stroke-width=".9" stroke-linejoin="round"/><path d="M10.6 5.295L13.9 2.82" stroke="#2e3436" stroke-width="1.5"/><path d="M10.6 7.935L13.9 5.46" stroke="#2e3436" stroke-width="1.5"/><path d="M10.6 10.575L13.9 8.1" stroke="#2e3436" stroke-width="1.5"/></g>
<g transform="translate(105.4,354.8) scale(.88)"><path d="M1 6c2.200-3 4.400-4.200 6.500-4.200s4.300 1.200 6.500 4.200c-2.200 3-4.400 4.200-6.500 4.200s-4.300-1.200-6.500-4.200z" fill="none" stroke="#9a9a9a" stroke-width="1"/><circle cx="7.500" cy="6" r="2.200" fill="none" stroke="#9a9a9a" stroke-width="1"/><path d="M3 .800l9.500 10.500" stroke="#9a9a9a" stroke-width="1.100"/></g>
<g transform="translate(124.2,352)"><path d="M4 4l8-2v3.500l-8 2zM4 8.500l8-2v3l-8 2zM4 12l9.500-2.400v3.900l-9.500 2.300z" fill="#a8a8a8" stroke="#8e8e8e" stroke-width=".6"/><path d="M6 2.500l-4.500 8.500c-.5 1 0 1.700 1 1.900l6.500 1.500" fill="none" stroke="#8c8c8c" stroke-width="2.4" stroke-linecap="round" stroke-linejoin="round"/><path d="M6 2.500l-4.500 8.500c-.5 1 0 1.700 1 1.900l6.500 1.500" fill="none" stroke="#d0d0d0" stroke-width="1" stroke-linecap="round" stroke-linejoin="round"/><path d="M10.5 0.5h4.5v9.02l-2.25 1.98l-2.25 -1.98z" fill="#d0d0d0" stroke="#8a8a8a" stroke-width=".9" stroke-linejoin="round"/><path d="M11.1 4.295L14.4 1.82" stroke="#8a8a8a" stroke-width="1.5"/><path d="M11.1 6.935L14.4 4.46" stroke="#8a8a8a" stroke-width="1.5"/><path d="M11.1 9.575L14.4 7.1" stroke="#8a8a8a" stroke-width="1.5"/></g>
<path d="M46.5 375.5h9l-4.500 5z" fill="#111"/>
<g transform="translate(65.4,372.8) scale(.88)"><path d="M1 6c2.200-3 4.400-4.200 6.500-4.200s4.300 1.200 6.500 4.200c-2.200 3-4.400 4.200-6.500 4.200s-4.300-1.200-6.500-4.200z" fill="none" stroke="#9a9a9a" stroke-width="1"/><circle cx="7.500" cy="6" r="2.200" fill="none" stroke="#9a9a9a" stroke-width="1"/><path d="M3 .800l9.500 10.500" stroke="#9a9a9a" stroke-width="1.100"/></g>
<g transform="translate(84.2,370)"><path d="M1 3.500v-2.500h5.500l1.500 2h7v12h-14z" fill="#a4a4a4"/><path d="M1 5h14v10h-14z" fill="#b4b4b4"/></g>
<g transform="translate(85.4,390.8) scale(.88)"><path d="M.8 6c2.200-3.200 4.500-4.500 6.700-4.500s4.500 1.300 6.700 4.500c-2.200 3.200-4.500 4.500-6.700 4.500s-4.500-1.300-6.700-4.500z" fill="#fff" stroke="#111" stroke-width="1.300"/><circle cx="7.500" cy="5.800" r="2.700" fill="#111"/><circle cx="6.600" cy="4.800" r=".9" fill="#fff"/></g>
<g transform="translate(104.2,388)"><path d="M1 6.500l8-4 6 1.500v6.500l-7 4.500-7-2z" fill="#3b6db3" stroke="#1c3a6b" stroke-width=".8" stroke-linejoin="round"/><path d="M1 6.500l8-4 6 1.500-7 4.500z" fill="#5f8fd0" stroke="#1c3a6b" stroke-width=".7" stroke-linejoin="round"/><path d="M8 8.500v6.500" stroke="#1c3a6b" stroke-width=".7"/></g>
<g fill="none" stroke="#7a7a7a" stroke-width="1.300"><rect x="297" y="159.500" width="8" height="8"/><path d="M297 162.500h8"/><rect x="316.500" y="162" width="5" height="5"/><path d="M319 162v-2.500h5.500v5.500h-3"/></g><path d="M335.500 159.500l8 8M343.500 159.500l-8 8" stroke="#333" stroke-width="1.900"/>
<path d="M338 180h4l-2-2zM338 398h4l-2 2z" fill="#8a8a8a"/>
<path d="M0 .5h1280" stroke="#9e9ea6"/><path d="M1279.500 0v720M0 719.500h1280" stroke="#a9a9a9"/><path d="M.5 0v720" stroke="#b4b4b8"/>
<g fill="#b8b8b8"><rect x="1276" y="716" width="2" height="2"/><rect x="1276" y="713" width="2" height="2"/><rect x="1276" y="710" width="2" height="2"/><rect x="1276" y="707" width="2" height="2"/><rect x="1273" y="716" width="2" height="2"/><rect x="1273" y="713" width="2" height="2"/><rect x="1273" y="710" width="2" height="2"/><rect x="1270" y="716" width="2" height="2"/><rect x="1270" y="713" width="2" height="2"/><rect x="1267" y="716" width="2" height="2"/></g>
<path d="M1160 15.500h10" stroke="#111" stroke-width="1"/><rect x="1205.500" y="10.500" width="9" height="9" rx="1.200" fill="none" stroke="#111" stroke-width="1"/><path d="M1251 10.500l10 10M1261 10.500l-10 10" stroke="#111" stroke-width="1"/>
<g transform="translate(8.5,6) scale(0.82)"><path d="M1.500 2h13l-1.200 5h-6.800v3h5l-1.100 4.500h-3.900v6.500h-5z" fill="#e0242c" stroke="#a5131a" stroke-width=".8" stroke-linejoin="round"/><path d="M10 9.500l1.200-2 2 .7 1.500-1.400 1.700 1.200-.5 2 1.600 1.300-.6 2-2 .3-.8 1.900-2.100-.2-1-1.800-2-.3z" fill="#3b6db3" stroke="#1f3f73" stroke-width=".6" stroke-linejoin="round" transform="translate(-1.500,3)"/></g>
<g transform="translate(359.5,662) scale(0.8)"><path d="M1.500 2h13l-1.200 5h-6.800v3h5l-1.100 4.500h-3.900v6.500h-5z" fill="#e0242c" stroke="#a5131a" stroke-width=".8" stroke-linejoin="round"/><path d="M10 9.500l1.200-2 2 .7 1.500-1.400 1.700 1.200-.5 2 1.600 1.300-.6 2-2 .3-.8 1.900-2.100-.2-1-1.800-2-.3z" fill="#3b6db3" stroke="#1f3f73" stroke-width=".6" stroke-linejoin="round" transform="translate(-1.500,3)"/></g>
<g transform="translate(450.500,664) scale(.82)"><path d="M2.500 .500h7.500l3.500 3.500v11.500h-11z" fill="#fafafa" stroke="#777" stroke-width=".9"/><path d="M10 .500v3.500h3.500" fill="#ddd" stroke="#777" stroke-width=".8"/><path d="M4 8.500l3-1.500 3 1.500v4l-3 1.500-3-1.500z" fill="#3465a4" stroke="#16335f" stroke-width=".7"/><circle cx="9.500" cy="6.500" r="2.300" fill="#d01818" stroke="#7a0000" stroke-width=".6"/></g>
<path d="M421.500 666l11.500 11.500M433 666l-11.500 11.500M553 666l11.500 11.500M564.500 666l-11.500 11.500" stroke="#5c5c5c" stroke-width="2.700"/>
<path d="M1008.5 703h7l-3.500 4z" fill="#8a8a8a"/><path d="M1104 703h7l-3.500 4z" fill="#8a8a8a"/><path d="M1248.5 703h7l-3.500 4z" fill="#8a8a8a"/>
<g fill="none" stroke="#333" stroke-width="1.300"><path d="M1037.500 701.500c1.500-3.500 6-4 8.500-1M1049.500 706.500c-1.500 3.500-6 4-8.500 1"/></g><circle cx="1038" cy="707.500" r="2.600" fill="#222"/><circle cx="1048.500" cy="700.500" r="2.600" fill="#222"/>
<path d="M231.8 349.6L559.2 329" fill="none" stroke="#e3141b" stroke-width="4.7" stroke-linecap="round"/>
<path d="M545.8 322.5L559.2 329L547.2 336.6" fill="none" stroke="#e3141b" stroke-width="3.7" stroke-linecap="round" stroke-linejoin="round"/>
<path d="M1051 199L955.7 294.6" fill="none" stroke="#e3141b" stroke-width="4.7" stroke-linecap="round"/>
<path d="M952.3 282.1L955.7 294.6L968 291.8" fill="none" stroke="#e3141b" stroke-width="3.7" stroke-linecap="round" stroke-linejoin="round"/>
<path d="M552.6 590.3L621.1 511" fill="none" stroke="#e3141b" stroke-width="4.7" stroke-linecap="round"/>
<path d="M607.7 512.7L621.1 511L620.2 522.3" fill="none" stroke="#e3141b" stroke-width="3.7" stroke-linecap="round" stroke-linejoin="round"/>
<path d="M1135 563.8L1004.4 478.6" fill="none" stroke="#e3141b" stroke-width="4.7" stroke-linecap="round"/>
<path d="M1016.6 478.1L1004.4 478.6L1007.7 488.7" fill="none" stroke="#e3141b" stroke-width="3.7" stroke-linecap="round" stroke-linejoin="round"/>
<rect x="58.5" y="332.4" width="156.6" height="40.5" fill="none" stroke="#e3141b" stroke-width="5.3"/>
<path d="M464.5 577.5v15.5l3.6-3.4 2.6 6 2-.9-2.6-5.9h4.9z" fill="#fff" stroke="#000" stroke-width="1" stroke-linejoin="round"/>
</svg></body></html>
